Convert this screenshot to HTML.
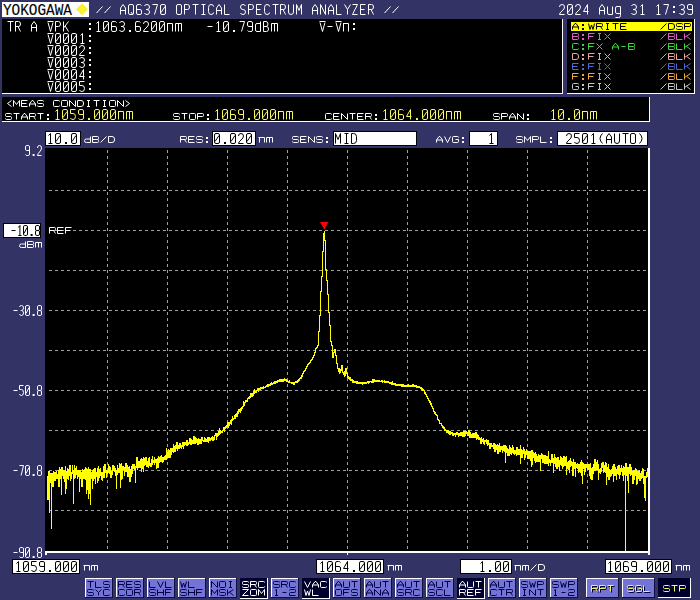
<!DOCTYPE html>
<html><head><meta charset="utf-8"><title>AQ6370</title>
<style>html,body{margin:0;padding:0;width:700px;height:600px;overflow:hidden;background:#333366;} svg{display:block;} text{font-family:"Liberation Mono",monospace;}</style>
</head><body>
<svg width="700" height="600" viewBox="0 0 700 600" shape-rendering="auto"><rect x="0" y="0" width="700" height="600" fill="#333366" />
<rect x="2" y="2" width="87" height="15" fill="#ffffff" />
<text x="3" y="15.20" font-family="Liberation Sans" font-weight="normal" font-size="16.28" fill="#000000" textLength="69.0" lengthAdjust="spacingAndGlyphs" xml:space="preserve" stroke="#000" stroke-width="0.15" opacity="0.99">YOKOGAWA</text>
<polygon points="82,3.2 88,9.2 82,15.2 76,9.2" fill="#f8f030"/>
<path transform="translate(96.50,4.5) scale(1.0,1.0)" d="M0,8.5 L6,2" fill="none" stroke="#ffffff" stroke-width="1.0" vector-effect="non-scaling-stroke"/>
<path transform="translate(104.50,4.5) scale(1.0,1.0)" d="M0,8.5 L6,2" fill="none" stroke="#ffffff" stroke-width="1.0" vector-effect="non-scaling-stroke"/>
<path transform="translate(120.50,4.5) scale(1.0,1.0)" d="M0,10 V3.5 L2.5,0 L5,3.5 V10 M0,6 H5" fill="none" stroke="#ffffff" stroke-width="1.0" vector-effect="non-scaling-stroke"/>
<path transform="translate(128.50,4.5) scale(1.0,1.0)" d="M1.5,0 H3.5 Q5,0 5,1.5 V8.5 Q5,10 3.5,10 H1.5 Q0,10 0,8.5 V1.5 Q0,0 1.5,0 Z M2.5,7.5 L4.5,10.5" fill="none" stroke="#ffffff" stroke-width="1.0" vector-effect="non-scaling-stroke"/>
<path transform="translate(136.50,4.5) scale(1.0,1.0)" d="M5,1 Q4.5,0 3,0 H1.5 Q0,0 0,1.5 V8.5 Q0,10 1.5,10 H3.5 Q5,10 5,8.5 V6.5 Q5,5 3.5,5 H0" fill="none" stroke="#ffffff" stroke-width="1.0" vector-effect="non-scaling-stroke"/>
<path transform="translate(144.50,4.5) scale(1.0,1.0)" d="M0,1.5 Q0.5,0 2.5,0 Q5,0 5,2.5 Q5,5 2.5,5 H1.5 M2.5,5 Q5,5 5,7.5 Q5,10 2.5,10 Q0.5,10 0,8.5" fill="none" stroke="#ffffff" stroke-width="1.0" vector-effect="non-scaling-stroke"/>
<path transform="translate(152.50,4.5) scale(1.0,1.0)" d="M0,0 H5 L2,10" fill="none" stroke="#ffffff" stroke-width="1.0" vector-effect="non-scaling-stroke"/>
<path transform="translate(160.50,4.5) scale(1.0,1.0)" d="M1.5,0 H3.5 Q5,0 5,1.5 V8.5 Q5,10 3.5,10 H1.5 Q0,10 0,8.5 V1.5 Q0,0 1.5,0 Z M4.5,2 L0.5,8" fill="none" stroke="#ffffff" stroke-width="1.0" vector-effect="non-scaling-stroke"/>
<path transform="translate(176.50,4.5) scale(1.0,1.0)" d="M1.5,0 H3.5 Q5,0 5,1.5 V8.5 Q5,10 3.5,10 H1.5 Q0,10 0,8.5 V1.5 Q0,0 1.5,0 Z" fill="none" stroke="#ffffff" stroke-width="1.0" vector-effect="non-scaling-stroke"/>
<path transform="translate(184.50,4.5) scale(1.0,1.0)" d="M0,10 V0 H3 Q5,0 5,2.5 Q5,5 3,5 H0" fill="none" stroke="#ffffff" stroke-width="1.0" vector-effect="non-scaling-stroke"/>
<path transform="translate(192.50,4.5) scale(1.0,1.0)" d="M0,0 H6 M3,0 V10" fill="none" stroke="#ffffff" stroke-width="1.0" vector-effect="non-scaling-stroke"/>
<path transform="translate(200.50,4.5) scale(1.0,1.0)" d="M1,0 H5 M3,0 V10 M1,10 H5" fill="none" stroke="#ffffff" stroke-width="1.0" vector-effect="non-scaling-stroke"/>
<path transform="translate(208.50,4.5) scale(1.0,1.0)" d="M5,2 Q5,0 2.5,0 Q0,0 0,3 V7 Q0,10 2.5,10 Q5,10 5,8" fill="none" stroke="#ffffff" stroke-width="1.0" vector-effect="non-scaling-stroke"/>
<path transform="translate(216.50,4.5) scale(1.0,1.0)" d="M0,10 V3.5 L2.5,0 L5,3.5 V10 M0,6 H5" fill="none" stroke="#ffffff" stroke-width="1.0" vector-effect="non-scaling-stroke"/>
<path transform="translate(224.50,4.5) scale(1.0,1.0)" d="M0,0 V10 H5" fill="none" stroke="#ffffff" stroke-width="1.0" vector-effect="non-scaling-stroke"/>
<path transform="translate(240.50,4.5) scale(1.0,1.0)" d="M5,1.5 Q4.5,0 2.5,0 Q0,0 0,2.5 Q0,5 2.5,5 Q5,5 5,7.5 Q5,10 2.5,10 Q0.5,10 0,8.5" fill="none" stroke="#ffffff" stroke-width="1.0" vector-effect="non-scaling-stroke"/>
<path transform="translate(248.50,4.5) scale(1.0,1.0)" d="M0,10 V0 H3 Q5,0 5,2.5 Q5,5 3,5 H0" fill="none" stroke="#ffffff" stroke-width="1.0" vector-effect="non-scaling-stroke"/>
<path transform="translate(256.50,4.5) scale(1.0,1.0)" d="M5,0 H0 V10 H5 M0,5 H4" fill="none" stroke="#ffffff" stroke-width="1.0" vector-effect="non-scaling-stroke"/>
<path transform="translate(264.50,4.5) scale(1.0,1.0)" d="M5,2 Q5,0 2.5,0 Q0,0 0,3 V7 Q0,10 2.5,10 Q5,10 5,8" fill="none" stroke="#ffffff" stroke-width="1.0" vector-effect="non-scaling-stroke"/>
<path transform="translate(272.50,4.5) scale(1.0,1.0)" d="M0,0 H6 M3,0 V10" fill="none" stroke="#ffffff" stroke-width="1.0" vector-effect="non-scaling-stroke"/>
<path transform="translate(280.50,4.5) scale(1.0,1.0)" d="M0,10 V0 H3 Q5,0 5,2.5 Q5,5 3,5 H0 M2.5,5 L5,10" fill="none" stroke="#ffffff" stroke-width="1.0" vector-effect="non-scaling-stroke"/>
<path transform="translate(288.50,4.5) scale(1.0,1.0)" d="M0,0 V7.5 Q0,10 2.5,10 Q5,10 5,7.5 V0" fill="none" stroke="#ffffff" stroke-width="1.0" vector-effect="non-scaling-stroke"/>
<path transform="translate(296.50,4.5) scale(1.0,1.0)" d="M0,10 V0 L2.5,6 L5,0 V10" fill="none" stroke="#ffffff" stroke-width="1.0" vector-effect="non-scaling-stroke"/>
<path transform="translate(312.50,4.5) scale(1.0,1.0)" d="M0,10 V3.5 L2.5,0 L5,3.5 V10 M0,6 H5" fill="none" stroke="#ffffff" stroke-width="1.0" vector-effect="non-scaling-stroke"/>
<path transform="translate(320.50,4.5) scale(1.0,1.0)" d="M0,10 V0 L5,10 V0" fill="none" stroke="#ffffff" stroke-width="1.0" vector-effect="non-scaling-stroke"/>
<path transform="translate(328.50,4.5) scale(1.0,1.0)" d="M0,10 V3.5 L2.5,0 L5,3.5 V10 M0,6 H5" fill="none" stroke="#ffffff" stroke-width="1.0" vector-effect="non-scaling-stroke"/>
<path transform="translate(336.50,4.5) scale(1.0,1.0)" d="M0,0 V10 H5" fill="none" stroke="#ffffff" stroke-width="1.0" vector-effect="non-scaling-stroke"/>
<path transform="translate(344.50,4.5) scale(1.0,1.0)" d="M0,0 L3,5 L6,0 M3,5 V10" fill="none" stroke="#ffffff" stroke-width="1.0" vector-effect="non-scaling-stroke"/>
<path transform="translate(352.50,4.5) scale(1.0,1.0)" d="M0,0 H5 L0,10 H5" fill="none" stroke="#ffffff" stroke-width="1.0" vector-effect="non-scaling-stroke"/>
<path transform="translate(360.50,4.5) scale(1.0,1.0)" d="M5,0 H0 V10 H5 M0,5 H4" fill="none" stroke="#ffffff" stroke-width="1.0" vector-effect="non-scaling-stroke"/>
<path transform="translate(368.50,4.5) scale(1.0,1.0)" d="M0,10 V0 H3 Q5,0 5,2.5 Q5,5 3,5 H0 M2.5,5 L5,10" fill="none" stroke="#ffffff" stroke-width="1.0" vector-effect="non-scaling-stroke"/>
<path transform="translate(384.50,4.5) scale(1.0,1.0)" d="M0,8.5 L6,2" fill="none" stroke="#ffffff" stroke-width="1.0" vector-effect="non-scaling-stroke"/>
<path transform="translate(392.50,4.5) scale(1.0,1.0)" d="M0,8.5 L6,2" fill="none" stroke="#ffffff" stroke-width="1.0" vector-effect="non-scaling-stroke"/>
<path transform="translate(559.50,4.5) scale(1.0,1.0)" d="M0,2.5 Q0,0 2.5,0 Q5,0 5,2.5 Q5,4.5 2.5,6.5 Q0,8.5 0,10 H5" fill="none" stroke="#ffffff" stroke-width="1.0" vector-effect="non-scaling-stroke"/>
<path transform="translate(567.50,4.5) scale(1.0,1.0)" d="M1.5,0 H3.5 Q5,0 5,1.5 V8.5 Q5,10 3.5,10 H1.5 Q0,10 0,8.5 V1.5 Q0,0 1.5,0 Z M4.5,2 L0.5,8" fill="none" stroke="#ffffff" stroke-width="1.0" vector-effect="non-scaling-stroke"/>
<path transform="translate(575.50,4.5) scale(1.0,1.0)" d="M0,2.5 Q0,0 2.5,0 Q5,0 5,2.5 Q5,4.5 2.5,6.5 Q0,8.5 0,10 H5" fill="none" stroke="#ffffff" stroke-width="1.0" vector-effect="non-scaling-stroke"/>
<path transform="translate(583.50,4.5) scale(1.0,1.0)" d="M4,10 V0 L0,7 H5" fill="none" stroke="#ffffff" stroke-width="1.0" vector-effect="non-scaling-stroke"/>
<path transform="translate(599.50,4.5) scale(1.0,1.0)" d="M0,10 V3.5 L2.5,0 L5,3.5 V10 M0,6 H5" fill="none" stroke="#ffffff" stroke-width="1.0" vector-effect="non-scaling-stroke"/>
<path transform="translate(607.50,4.5) scale(1.0,1.0)" d="M0,2 V8.5 Q0,10 1.5,10 H5 M5,2 V10" fill="none" stroke="#ffffff" stroke-width="1.0" vector-effect="non-scaling-stroke"/>
<path transform="translate(615.50,4.5) scale(1.0,1.0)" d="M5,2 V11 Q5,13 3,13 H0 M5,2 H1.5 Q0,2 0,3.5 V7.5 Q0,9 1.5,9 H5" fill="none" stroke="#ffffff" stroke-width="1.0" vector-effect="non-scaling-stroke"/>
<path transform="translate(631.50,4.5) scale(1.0,1.0)" d="M0,1.5 Q0.5,0 2.5,0 Q5,0 5,2.5 Q5,5 2.5,5 H1.5 M2.5,5 Q5,5 5,7.5 Q5,10 2.5,10 Q0.5,10 0,8.5" fill="none" stroke="#ffffff" stroke-width="1.0" vector-effect="non-scaling-stroke"/>
<path transform="translate(639.50,4.5) scale(1.0,1.0)" d="M1,2 L3,0 V10 M1,10 H5" fill="none" stroke="#ffffff" stroke-width="1.0" vector-effect="non-scaling-stroke"/>
<path transform="translate(655.50,4.5) scale(1.0,1.0)" d="M1,2 L3,0 V10 M1,10 H5" fill="none" stroke="#ffffff" stroke-width="1.0" vector-effect="non-scaling-stroke"/>
<path transform="translate(663.50,4.5) scale(1.0,1.0)" d="M0,0 H5 L2,10" fill="none" stroke="#ffffff" stroke-width="1.0" vector-effect="non-scaling-stroke"/>
<rect x="673.00" y="6" width="2" height="2" fill="#ffffff"/><rect x="673.00" y="11" width="2" height="2" fill="#ffffff"/>
<path transform="translate(679.50,4.5) scale(1.0,1.0)" d="M0,1.5 Q0.5,0 2.5,0 Q5,0 5,2.5 Q5,5 2.5,5 H1.5 M2.5,5 Q5,5 5,7.5 Q5,10 2.5,10 Q0.5,10 0,8.5" fill="none" stroke="#ffffff" stroke-width="1.0" vector-effect="non-scaling-stroke"/>
<path transform="translate(687.50,4.5) scale(1.0,1.0)" d="M0,9 Q0.5,10 2,10 H3.5 Q5,10 5,8.5 V1.5 Q5,0 3.5,0 H1.5 Q0,0 0,1.5 V3.5 Q0,5 1.5,5 H5" fill="none" stroke="#ffffff" stroke-width="1.0" vector-effect="non-scaling-stroke"/>
<rect x="2" y="19" width="560" height="74" fill="#000000" />
<rect x="2" y="93" width="561" height="1" fill="#ffffff" />
<rect x="562" y="19" width="1" height="75" fill="#ffffff" />
<path transform="translate(7.50,21.5) scale(1.0,1.0)" d="M0,0 H6 M3,0 V10" fill="none" stroke="#ffffff" stroke-width="1.0" vector-effect="non-scaling-stroke"/>
<path transform="translate(15.50,21.5) scale(1.0,1.0)" d="M0,10 V0 H3 Q5,0 5,2.5 Q5,5 3,5 H0 M2.5,5 L5,10" fill="none" stroke="#ffffff" stroke-width="1.0" vector-effect="non-scaling-stroke"/>
<path transform="translate(31.50,21.5) scale(1.0,1.0)" d="M0,10 V3.5 L2.5,0 L5,3.5 V10 M0,6 H5" fill="none" stroke="#ffffff" stroke-width="1.0" vector-effect="non-scaling-stroke"/>
<path transform="translate(47.50,21.5) scale(1.0,1.0)" d="M0,0 H6 M0.5,1 L3,10 L5.5,1" fill="none" stroke="#ffffff" stroke-width="1.0" vector-effect="non-scaling-stroke"/>
<path transform="translate(55.50,21.5) scale(1.0,1.0)" d="M0,10 V0 H3 Q5,0 5,2.5 Q5,5 3,5 H0" fill="none" stroke="#ffffff" stroke-width="1.0" vector-effect="non-scaling-stroke"/>
<path transform="translate(63.50,21.5) scale(1.0,1.0)" d="M0,0 V10 M5,0 L0,6.5 M1.7,4.5 L5,10" fill="none" stroke="#ffffff" stroke-width="1.0" vector-effect="non-scaling-stroke"/>
<rect x="89.00" y="23" width="2" height="2" fill="#ffffff"/><rect x="89.00" y="28" width="2" height="2" fill="#ffffff"/>
<path transform="translate(95.50,21.5) scale(1.0,1.0)" d="M1,2 L3,0 V10 M1,10 H5" fill="none" stroke="#ffffff" stroke-width="1.0" vector-effect="non-scaling-stroke"/>
<path transform="translate(103.50,21.5) scale(1.0,1.0)" d="M1.5,0 H3.5 Q5,0 5,1.5 V8.5 Q5,10 3.5,10 H1.5 Q0,10 0,8.5 V1.5 Q0,0 1.5,0 Z M4.5,2 L0.5,8" fill="none" stroke="#ffffff" stroke-width="1.0" vector-effect="non-scaling-stroke"/>
<path transform="translate(111.50,21.5) scale(1.0,1.0)" d="M5,1 Q4.5,0 3,0 H1.5 Q0,0 0,1.5 V8.5 Q0,10 1.5,10 H3.5 Q5,10 5,8.5 V6.5 Q5,5 3.5,5 H0" fill="none" stroke="#ffffff" stroke-width="1.0" vector-effect="non-scaling-stroke"/>
<path transform="translate(119.50,21.5) scale(1.0,1.0)" d="M0,1.5 Q0.5,0 2.5,0 Q5,0 5,2.5 Q5,5 2.5,5 H1.5 M2.5,5 Q5,5 5,7.5 Q5,10 2.5,10 Q0.5,10 0,8.5" fill="none" stroke="#ffffff" stroke-width="1.0" vector-effect="non-scaling-stroke"/>
<rect x="129.00" y="30" width="2" height="2" fill="#ffffff"/>
<path transform="translate(135.50,21.5) scale(1.0,1.0)" d="M5,1 Q4.5,0 3,0 H1.5 Q0,0 0,1.5 V8.5 Q0,10 1.5,10 H3.5 Q5,10 5,8.5 V6.5 Q5,5 3.5,5 H0" fill="none" stroke="#ffffff" stroke-width="1.0" vector-effect="non-scaling-stroke"/>
<path transform="translate(143.50,21.5) scale(1.0,1.0)" d="M0,2.5 Q0,0 2.5,0 Q5,0 5,2.5 Q5,4.5 2.5,6.5 Q0,8.5 0,10 H5" fill="none" stroke="#ffffff" stroke-width="1.0" vector-effect="non-scaling-stroke"/>
<path transform="translate(151.50,21.5) scale(1.0,1.0)" d="M1.5,0 H3.5 Q5,0 5,1.5 V8.5 Q5,10 3.5,10 H1.5 Q0,10 0,8.5 V1.5 Q0,0 1.5,0 Z M4.5,2 L0.5,8" fill="none" stroke="#ffffff" stroke-width="1.0" vector-effect="non-scaling-stroke"/>
<path transform="translate(159.50,21.5) scale(1.0,1.0)" d="M1.5,0 H3.5 Q5,0 5,1.5 V8.5 Q5,10 3.5,10 H1.5 Q0,10 0,8.5 V1.5 Q0,0 1.5,0 Z M4.5,2 L0.5,8" fill="none" stroke="#ffffff" stroke-width="1.0" vector-effect="non-scaling-stroke"/>
<path transform="translate(167.50,21.5) scale(1.0,1.0)" d="M0,2 V10 M-0.5,2 H5 V10" fill="none" stroke="#ffffff" stroke-width="1.0" vector-effect="non-scaling-stroke"/>
<path transform="translate(175.50,21.5) scale(1.0,1.0)" d="M0,2 V10 M0,2 H6 V10 M3,2 V10" fill="none" stroke="#ffffff" stroke-width="1.0" vector-effect="non-scaling-stroke"/>
<path transform="translate(207.50,21.5) scale(1.0,1.0)" d="M0,5 H5" fill="none" stroke="#ffffff" stroke-width="1.0" vector-effect="non-scaling-stroke"/>
<path transform="translate(215.50,21.5) scale(1.0,1.0)" d="M1,2 L3,0 V10 M1,10 H5" fill="none" stroke="#ffffff" stroke-width="1.0" vector-effect="non-scaling-stroke"/>
<path transform="translate(223.50,21.5) scale(1.0,1.0)" d="M1.5,0 H3.5 Q5,0 5,1.5 V8.5 Q5,10 3.5,10 H1.5 Q0,10 0,8.5 V1.5 Q0,0 1.5,0 Z M4.5,2 L0.5,8" fill="none" stroke="#ffffff" stroke-width="1.0" vector-effect="non-scaling-stroke"/>
<rect x="233.00" y="30" width="2" height="2" fill="#ffffff"/>
<path transform="translate(239.50,21.5) scale(1.0,1.0)" d="M0,0 H5 L2,10" fill="none" stroke="#ffffff" stroke-width="1.0" vector-effect="non-scaling-stroke"/>
<path transform="translate(247.50,21.5) scale(1.0,1.0)" d="M0,9 Q0.5,10 2,10 H3.5 Q5,10 5,8.5 V1.5 Q5,0 3.5,0 H1.5 Q0,0 0,1.5 V3.5 Q0,5 1.5,5 H5" fill="none" stroke="#ffffff" stroke-width="1.0" vector-effect="non-scaling-stroke"/>
<path transform="translate(255.50,21.5) scale(1.0,1.0)" d="M5,0 V10 H1.5 Q0,10 0,8.5 V3.5 Q0,2 1.5,2 H5" fill="none" stroke="#ffffff" stroke-width="1.0" vector-effect="non-scaling-stroke"/>
<path transform="translate(263.50,21.5) scale(1.0,1.0)" d="M0,0 V10 H3 Q5,10 5,7.5 Q5,5 3,5 H0 M0,0 H2.5 Q4.5,0 4.5,2.5 Q4.5,5 2.5,5" fill="none" stroke="#ffffff" stroke-width="1.0" vector-effect="non-scaling-stroke"/>
<path transform="translate(271.50,21.5) scale(1.0,1.0)" d="M0,2 V10 M0,2 H6 V10 M3,2 V10" fill="none" stroke="#ffffff" stroke-width="1.0" vector-effect="non-scaling-stroke"/>
<path transform="translate(319.50,21.5) scale(1.0,1.0)" d="M0,0 H6 M0.5,1 L3,10 L5.5,1" fill="none" stroke="#ffffff" stroke-width="1.0" vector-effect="non-scaling-stroke"/>
<path transform="translate(327.50,21.5) scale(1.0,1.0)" d="M0,5 H5" fill="none" stroke="#ffffff" stroke-width="1.0" vector-effect="non-scaling-stroke"/>
<path transform="translate(335.50,21.5) scale(1.0,1.0)" d="M0,0 H6 M0.5,1 L3,10 L5.5,1" fill="none" stroke="#ffffff" stroke-width="1.0" vector-effect="non-scaling-stroke"/>
<path transform="translate(343.50,21.5) scale(1.0,1.0)" d="M0,2 V10 M-0.5,2 H5 V10" fill="none" stroke="#ffffff" stroke-width="1.0" vector-effect="non-scaling-stroke"/>
<rect x="353.00" y="23" width="2" height="2" fill="#ffffff"/><rect x="353.00" y="28" width="2" height="2" fill="#ffffff"/>
<path transform="translate(47.50,33.5) scale(1.0,1.0)" d="M0,0 H6 M0.5,1 L3,10 L5.5,1" fill="none" stroke="#ffffff" stroke-width="1.0" vector-effect="non-scaling-stroke"/>
<path transform="translate(55.50,33.5) scale(1.0,1.0)" d="M1.5,0 H3.5 Q5,0 5,1.5 V8.5 Q5,10 3.5,10 H1.5 Q0,10 0,8.5 V1.5 Q0,0 1.5,0 Z M4.5,2 L0.5,8" fill="none" stroke="#ffffff" stroke-width="1.0" vector-effect="non-scaling-stroke"/>
<path transform="translate(63.50,33.5) scale(1.0,1.0)" d="M1.5,0 H3.5 Q5,0 5,1.5 V8.5 Q5,10 3.5,10 H1.5 Q0,10 0,8.5 V1.5 Q0,0 1.5,0 Z M4.5,2 L0.5,8" fill="none" stroke="#ffffff" stroke-width="1.0" vector-effect="non-scaling-stroke"/>
<path transform="translate(71.50,33.5) scale(1.0,1.0)" d="M1.5,0 H3.5 Q5,0 5,1.5 V8.5 Q5,10 3.5,10 H1.5 Q0,10 0,8.5 V1.5 Q0,0 1.5,0 Z M4.5,2 L0.5,8" fill="none" stroke="#ffffff" stroke-width="1.0" vector-effect="non-scaling-stroke"/>
<path transform="translate(79.50,33.5) scale(1.0,1.0)" d="M1,2 L3,0 V10 M1,10 H5" fill="none" stroke="#ffffff" stroke-width="1.0" vector-effect="non-scaling-stroke"/>
<rect x="89.00" y="35" width="2" height="2" fill="#ffffff"/><rect x="89.00" y="40" width="2" height="2" fill="#ffffff"/>
<path transform="translate(47.50,45.5) scale(1.0,1.0)" d="M0,0 H6 M0.5,1 L3,10 L5.5,1" fill="none" stroke="#ffffff" stroke-width="1.0" vector-effect="non-scaling-stroke"/>
<path transform="translate(55.50,45.5) scale(1.0,1.0)" d="M1.5,0 H3.5 Q5,0 5,1.5 V8.5 Q5,10 3.5,10 H1.5 Q0,10 0,8.5 V1.5 Q0,0 1.5,0 Z M4.5,2 L0.5,8" fill="none" stroke="#ffffff" stroke-width="1.0" vector-effect="non-scaling-stroke"/>
<path transform="translate(63.50,45.5) scale(1.0,1.0)" d="M1.5,0 H3.5 Q5,0 5,1.5 V8.5 Q5,10 3.5,10 H1.5 Q0,10 0,8.5 V1.5 Q0,0 1.5,0 Z M4.5,2 L0.5,8" fill="none" stroke="#ffffff" stroke-width="1.0" vector-effect="non-scaling-stroke"/>
<path transform="translate(71.50,45.5) scale(1.0,1.0)" d="M1.5,0 H3.5 Q5,0 5,1.5 V8.5 Q5,10 3.5,10 H1.5 Q0,10 0,8.5 V1.5 Q0,0 1.5,0 Z M4.5,2 L0.5,8" fill="none" stroke="#ffffff" stroke-width="1.0" vector-effect="non-scaling-stroke"/>
<path transform="translate(79.50,45.5) scale(1.0,1.0)" d="M0,2.5 Q0,0 2.5,0 Q5,0 5,2.5 Q5,4.5 2.5,6.5 Q0,8.5 0,10 H5" fill="none" stroke="#ffffff" stroke-width="1.0" vector-effect="non-scaling-stroke"/>
<rect x="89.00" y="47" width="2" height="2" fill="#ffffff"/><rect x="89.00" y="52" width="2" height="2" fill="#ffffff"/>
<path transform="translate(47.50,57.5) scale(1.0,1.0)" d="M0,0 H6 M0.5,1 L3,10 L5.5,1" fill="none" stroke="#ffffff" stroke-width="1.0" vector-effect="non-scaling-stroke"/>
<path transform="translate(55.50,57.5) scale(1.0,1.0)" d="M1.5,0 H3.5 Q5,0 5,1.5 V8.5 Q5,10 3.5,10 H1.5 Q0,10 0,8.5 V1.5 Q0,0 1.5,0 Z M4.5,2 L0.5,8" fill="none" stroke="#ffffff" stroke-width="1.0" vector-effect="non-scaling-stroke"/>
<path transform="translate(63.50,57.5) scale(1.0,1.0)" d="M1.5,0 H3.5 Q5,0 5,1.5 V8.5 Q5,10 3.5,10 H1.5 Q0,10 0,8.5 V1.5 Q0,0 1.5,0 Z M4.5,2 L0.5,8" fill="none" stroke="#ffffff" stroke-width="1.0" vector-effect="non-scaling-stroke"/>
<path transform="translate(71.50,57.5) scale(1.0,1.0)" d="M1.5,0 H3.5 Q5,0 5,1.5 V8.5 Q5,10 3.5,10 H1.5 Q0,10 0,8.5 V1.5 Q0,0 1.5,0 Z M4.5,2 L0.5,8" fill="none" stroke="#ffffff" stroke-width="1.0" vector-effect="non-scaling-stroke"/>
<path transform="translate(79.50,57.5) scale(1.0,1.0)" d="M0,1.5 Q0.5,0 2.5,0 Q5,0 5,2.5 Q5,5 2.5,5 H1.5 M2.5,5 Q5,5 5,7.5 Q5,10 2.5,10 Q0.5,10 0,8.5" fill="none" stroke="#ffffff" stroke-width="1.0" vector-effect="non-scaling-stroke"/>
<rect x="89.00" y="59" width="2" height="2" fill="#ffffff"/><rect x="89.00" y="64" width="2" height="2" fill="#ffffff"/>
<path transform="translate(47.50,69.5) scale(1.0,1.0)" d="M0,0 H6 M0.5,1 L3,10 L5.5,1" fill="none" stroke="#ffffff" stroke-width="1.0" vector-effect="non-scaling-stroke"/>
<path transform="translate(55.50,69.5) scale(1.0,1.0)" d="M1.5,0 H3.5 Q5,0 5,1.5 V8.5 Q5,10 3.5,10 H1.5 Q0,10 0,8.5 V1.5 Q0,0 1.5,0 Z M4.5,2 L0.5,8" fill="none" stroke="#ffffff" stroke-width="1.0" vector-effect="non-scaling-stroke"/>
<path transform="translate(63.50,69.5) scale(1.0,1.0)" d="M1.5,0 H3.5 Q5,0 5,1.5 V8.5 Q5,10 3.5,10 H1.5 Q0,10 0,8.5 V1.5 Q0,0 1.5,0 Z M4.5,2 L0.5,8" fill="none" stroke="#ffffff" stroke-width="1.0" vector-effect="non-scaling-stroke"/>
<path transform="translate(71.50,69.5) scale(1.0,1.0)" d="M1.5,0 H3.5 Q5,0 5,1.5 V8.5 Q5,10 3.5,10 H1.5 Q0,10 0,8.5 V1.5 Q0,0 1.5,0 Z M4.5,2 L0.5,8" fill="none" stroke="#ffffff" stroke-width="1.0" vector-effect="non-scaling-stroke"/>
<path transform="translate(79.50,69.5) scale(1.0,1.0)" d="M4,10 V0 L0,7 H5" fill="none" stroke="#ffffff" stroke-width="1.0" vector-effect="non-scaling-stroke"/>
<rect x="89.00" y="71" width="2" height="2" fill="#ffffff"/><rect x="89.00" y="76" width="2" height="2" fill="#ffffff"/>
<path transform="translate(47.50,81.5) scale(1.0,1.0)" d="M0,0 H6 M0.5,1 L3,10 L5.5,1" fill="none" stroke="#ffffff" stroke-width="1.0" vector-effect="non-scaling-stroke"/>
<path transform="translate(55.50,81.5) scale(1.0,1.0)" d="M1.5,0 H3.5 Q5,0 5,1.5 V8.5 Q5,10 3.5,10 H1.5 Q0,10 0,8.5 V1.5 Q0,0 1.5,0 Z M4.5,2 L0.5,8" fill="none" stroke="#ffffff" stroke-width="1.0" vector-effect="non-scaling-stroke"/>
<path transform="translate(63.50,81.5) scale(1.0,1.0)" d="M1.5,0 H3.5 Q5,0 5,1.5 V8.5 Q5,10 3.5,10 H1.5 Q0,10 0,8.5 V1.5 Q0,0 1.5,0 Z M4.5,2 L0.5,8" fill="none" stroke="#ffffff" stroke-width="1.0" vector-effect="non-scaling-stroke"/>
<path transform="translate(71.50,81.5) scale(1.0,1.0)" d="M1.5,0 H3.5 Q5,0 5,1.5 V8.5 Q5,10 3.5,10 H1.5 Q0,10 0,8.5 V1.5 Q0,0 1.5,0 Z M4.5,2 L0.5,8" fill="none" stroke="#ffffff" stroke-width="1.0" vector-effect="non-scaling-stroke"/>
<path transform="translate(79.50,81.5) scale(1.0,1.0)" d="M5,0 H0 V4 H2.5 Q5,4 5,7 Q5,10 2.5,10 Q0.5,10 0,8.5" fill="none" stroke="#ffffff" stroke-width="1.0" vector-effect="non-scaling-stroke"/>
<rect x="89.00" y="83" width="2" height="2" fill="#ffffff"/><rect x="89.00" y="88" width="2" height="2" fill="#ffffff"/>
<rect x="567" y="19" width="127" height="74" fill="#000000" />
<rect x="694" y="19" width="1" height="75" fill="#ffffff" />
<rect x="567" y="93" width="128" height="1" fill="#ffffff" />
<rect x="571" y="22" width="121" height="9" fill="#ffff00" />
<path transform="translate(572.5,23.5) scale(1.0,1.0)" d="M0,6 V3.5 L2.5,0 H3.5 L6,3.5 V6 M0,3.5 H6" fill="none" stroke="#000000" stroke-width="1" vector-effect="non-scaling-stroke"/>
<rect x="582" y="24" width="2" height="2" fill="#000000"/><rect x="582" y="28" width="2" height="2" fill="#000000"/>
<path transform="translate(588.5,23.5) scale(1.0,1.0)" d="M0,0 L1.5,6 L3,1.5 L4.5,6 L6,0" fill="none" stroke="#000000" stroke-width="1" vector-effect="non-scaling-stroke"/>
<path transform="translate(596.5,23.5) scale(1.0,1.0)" d="M0,6 V0 H5 Q6,0 6,1 V2 Q6,3 5,3 H0 M4,3 L6,6" fill="none" stroke="#000000" stroke-width="1" vector-effect="non-scaling-stroke"/>
<path transform="translate(604.5,23.5) scale(1.0,1.0)" d="M1.5,0 H4.5 M3,0 V6 M1.5,6 H4.5" fill="none" stroke="#000000" stroke-width="1" vector-effect="non-scaling-stroke"/>
<path transform="translate(612.5,23.5) scale(1.0,1.0)" d="M0,0 H6 M3,0 V6" fill="none" stroke="#000000" stroke-width="1" vector-effect="non-scaling-stroke"/>
<path transform="translate(620.5,23.5) scale(1.0,1.0)" d="M6,0 H0 V6 H6 M0,3 H5" fill="none" stroke="#000000" stroke-width="1" vector-effect="non-scaling-stroke"/>
<path transform="translate(660.5,23.5) scale(1.0,1.0)" d="M0,6 L6,0" fill="none" stroke="#000000" stroke-width="1" vector-effect="non-scaling-stroke"/>
<path transform="translate(668.5,23.5) scale(1.0,1.0)" d="M0,0 V6 H3.5 Q6,6 6,3.5 V2.5 Q6,0 3.5,0 Z" fill="none" stroke="#000000" stroke-width="1" vector-effect="non-scaling-stroke"/>
<path transform="translate(676.5,23.5) scale(1.0,1.0)" d="M6,1 Q6,0 5,0 H1 Q0,0 0,1 V2 Q0,3 1,3 H5 Q6,3 6,4 V5 Q6,6 5,6 H1 Q0,6 0,5" fill="none" stroke="#000000" stroke-width="1" vector-effect="non-scaling-stroke"/>
<path transform="translate(684.5,23.5) scale(1.0,1.0)" d="M0,6 V0 H5 Q6,0 6,1 V2 Q6,3 5,3 H0" fill="none" stroke="#000000" stroke-width="1" vector-effect="non-scaling-stroke"/>
<path transform="translate(572.5,33.5) scale(1.0,1.0)" d="M0,0 V6 H5 Q6,6 6,5 V4 Q6,3 5,3 H0 M0,0 H5 Q6,0 6,1 V2 Q6,3 5,3" fill="none" stroke="#e060c8" stroke-width="1" vector-effect="non-scaling-stroke"/>
<rect x="582" y="34" width="2" height="2" fill="#e060c8"/><rect x="582" y="38" width="2" height="2" fill="#e060c8"/>
<path transform="translate(588.5,33.5) scale(1.0,1.0)" d="M6,0 H0 V6 M0,3 H5" fill="none" stroke="#e060c8" stroke-width="1" vector-effect="non-scaling-stroke"/>
<path transform="translate(596.5,33.5) scale(1.0,1.0)" d="M1.5,0 H4.5 M3,0 V6 M1.5,6 H4.5" fill="none" stroke="#e060c8" stroke-width="1" vector-effect="non-scaling-stroke"/>
<path transform="translate(604.5,33.5) scale(1.0,1.0)" d="M0,0 L6,6 M6,0 L0,6" fill="none" stroke="#e060c8" stroke-width="1" vector-effect="non-scaling-stroke"/>
<path transform="translate(660.5,33.5) scale(1.0,1.0)" d="M0,6 L6,0" fill="none" stroke="#e060c8" stroke-width="1" vector-effect="non-scaling-stroke"/>
<path transform="translate(668.5,33.5) scale(1.0,1.0)" d="M0,0 V6 H5 Q6,6 6,5 V4 Q6,3 5,3 H0 M0,0 H5 Q6,0 6,1 V2 Q6,3 5,3" fill="none" stroke="#e060c8" stroke-width="1" vector-effect="non-scaling-stroke"/>
<path transform="translate(676.5,33.5) scale(1.0,1.0)" d="M0,0 V6 H6" fill="none" stroke="#e060c8" stroke-width="1" vector-effect="non-scaling-stroke"/>
<path transform="translate(684.5,33.5) scale(1.0,1.0)" d="M0,0 V6 M6,0 L0,4 M2,2.8 L6,6" fill="none" stroke="#e060c8" stroke-width="1" vector-effect="non-scaling-stroke"/>
<path transform="translate(572.5,43.5) scale(1.0,1.0)" d="M6,1 Q6,0 5,0 H1 Q0,0 0,1 V5 Q0,6 1,6 H5 Q6,6 6,5" fill="none" stroke="#40d840" stroke-width="1" vector-effect="non-scaling-stroke"/>
<rect x="582" y="44" width="2" height="2" fill="#40d840"/><rect x="582" y="48" width="2" height="2" fill="#40d840"/>
<path transform="translate(588.5,43.5) scale(1.0,1.0)" d="M6,0 H0 V6 M0,3 H5" fill="none" stroke="#40d840" stroke-width="1" vector-effect="non-scaling-stroke"/>
<path transform="translate(596.5,43.5) scale(1.0,1.0)" d="M0,0 L6,6 M6,0 L0,6" fill="none" stroke="#40d840" stroke-width="1" vector-effect="non-scaling-stroke"/>
<path transform="translate(612.5,43.5) scale(1.0,1.0)" d="M0,6 V3.5 L2.5,0 H3.5 L6,3.5 V6 M0,3.5 H6" fill="none" stroke="#40d840" stroke-width="1" vector-effect="non-scaling-stroke"/>
<path transform="translate(620.5,43.5) scale(1.0,1.0)" d="M1,3 H5" fill="none" stroke="#40d840" stroke-width="1" vector-effect="non-scaling-stroke"/>
<path transform="translate(628.5,43.5) scale(1.0,1.0)" d="M0,0 V6 H5 Q6,6 6,5 V4 Q6,3 5,3 H0 M0,0 H5 Q6,0 6,1 V2 Q6,3 5,3" fill="none" stroke="#40d840" stroke-width="1" vector-effect="non-scaling-stroke"/>
<path transform="translate(660.5,43.5) scale(1.0,1.0)" d="M0,6 L6,0" fill="none" stroke="#40d840" stroke-width="1" vector-effect="non-scaling-stroke"/>
<path transform="translate(668.5,43.5) scale(1.0,1.0)" d="M0,0 V6 H5 Q6,6 6,5 V4 Q6,3 5,3 H0 M0,0 H5 Q6,0 6,1 V2 Q6,3 5,3" fill="none" stroke="#40d840" stroke-width="1" vector-effect="non-scaling-stroke"/>
<path transform="translate(676.5,43.5) scale(1.0,1.0)" d="M0,0 V6 H6" fill="none" stroke="#40d840" stroke-width="1" vector-effect="non-scaling-stroke"/>
<path transform="translate(684.5,43.5) scale(1.0,1.0)" d="M0,0 V6 M6,0 L0,4 M2,2.8 L6,6" fill="none" stroke="#40d840" stroke-width="1" vector-effect="non-scaling-stroke"/>
<path transform="translate(572.5,53.5) scale(1.0,1.0)" d="M0,0 V6 H3.5 Q6,6 6,3.5 V2.5 Q6,0 3.5,0 Z" fill="none" stroke="#e8a8a0" stroke-width="1" vector-effect="non-scaling-stroke"/>
<rect x="582" y="54" width="2" height="2" fill="#e8a8a0"/><rect x="582" y="58" width="2" height="2" fill="#e8a8a0"/>
<path transform="translate(588.5,53.5) scale(1.0,1.0)" d="M6,0 H0 V6 M0,3 H5" fill="none" stroke="#e8a8a0" stroke-width="1" vector-effect="non-scaling-stroke"/>
<path transform="translate(596.5,53.5) scale(1.0,1.0)" d="M1.5,0 H4.5 M3,0 V6 M1.5,6 H4.5" fill="none" stroke="#e8a8a0" stroke-width="1" vector-effect="non-scaling-stroke"/>
<path transform="translate(604.5,53.5) scale(1.0,1.0)" d="M0,0 L6,6 M6,0 L0,6" fill="none" stroke="#e8a8a0" stroke-width="1" vector-effect="non-scaling-stroke"/>
<path transform="translate(660.5,53.5) scale(1.0,1.0)" d="M0,6 L6,0" fill="none" stroke="#e8a8a0" stroke-width="1" vector-effect="non-scaling-stroke"/>
<path transform="translate(668.5,53.5) scale(1.0,1.0)" d="M0,0 V6 H5 Q6,6 6,5 V4 Q6,3 5,3 H0 M0,0 H5 Q6,0 6,1 V2 Q6,3 5,3" fill="none" stroke="#e8a8a0" stroke-width="1" vector-effect="non-scaling-stroke"/>
<path transform="translate(676.5,53.5) scale(1.0,1.0)" d="M0,0 V6 H6" fill="none" stroke="#e8a8a0" stroke-width="1" vector-effect="non-scaling-stroke"/>
<path transform="translate(684.5,53.5) scale(1.0,1.0)" d="M0,0 V6 M6,0 L0,4 M2,2.8 L6,6" fill="none" stroke="#e8a8a0" stroke-width="1" vector-effect="non-scaling-stroke"/>
<path transform="translate(572.5,63.5) scale(1.0,1.0)" d="M6,0 H0 V6 H6 M0,3 H5" fill="none" stroke="#5868d0" stroke-width="1" vector-effect="non-scaling-stroke"/>
<rect x="582" y="64" width="2" height="2" fill="#5868d0"/><rect x="582" y="68" width="2" height="2" fill="#5868d0"/>
<path transform="translate(588.5,63.5) scale(1.0,1.0)" d="M6,0 H0 V6 M0,3 H5" fill="none" stroke="#5868d0" stroke-width="1" vector-effect="non-scaling-stroke"/>
<path transform="translate(596.5,63.5) scale(1.0,1.0)" d="M1.5,0 H4.5 M3,0 V6 M1.5,6 H4.5" fill="none" stroke="#5868d0" stroke-width="1" vector-effect="non-scaling-stroke"/>
<path transform="translate(604.5,63.5) scale(1.0,1.0)" d="M0,0 L6,6 M6,0 L0,6" fill="none" stroke="#5868d0" stroke-width="1" vector-effect="non-scaling-stroke"/>
<path transform="translate(660.5,63.5) scale(1.0,1.0)" d="M0,6 L6,0" fill="none" stroke="#5868d0" stroke-width="1" vector-effect="non-scaling-stroke"/>
<path transform="translate(668.5,63.5) scale(1.0,1.0)" d="M0,0 V6 H5 Q6,6 6,5 V4 Q6,3 5,3 H0 M0,0 H5 Q6,0 6,1 V2 Q6,3 5,3" fill="none" stroke="#5868d0" stroke-width="1" vector-effect="non-scaling-stroke"/>
<path transform="translate(676.5,63.5) scale(1.0,1.0)" d="M0,0 V6 H6" fill="none" stroke="#5868d0" stroke-width="1" vector-effect="non-scaling-stroke"/>
<path transform="translate(684.5,63.5) scale(1.0,1.0)" d="M0,0 V6 M6,0 L0,4 M2,2.8 L6,6" fill="none" stroke="#5868d0" stroke-width="1" vector-effect="non-scaling-stroke"/>
<path transform="translate(572.5,73.5) scale(1.0,1.0)" d="M6,0 H0 V6 M0,3 H5" fill="none" stroke="#f0a840" stroke-width="1" vector-effect="non-scaling-stroke"/>
<rect x="582" y="74" width="2" height="2" fill="#f0a840"/><rect x="582" y="78" width="2" height="2" fill="#f0a840"/>
<path transform="translate(588.5,73.5) scale(1.0,1.0)" d="M6,0 H0 V6 M0,3 H5" fill="none" stroke="#f0a840" stroke-width="1" vector-effect="non-scaling-stroke"/>
<path transform="translate(596.5,73.5) scale(1.0,1.0)" d="M1.5,0 H4.5 M3,0 V6 M1.5,6 H4.5" fill="none" stroke="#f0a840" stroke-width="1" vector-effect="non-scaling-stroke"/>
<path transform="translate(604.5,73.5) scale(1.0,1.0)" d="M0,0 L6,6 M6,0 L0,6" fill="none" stroke="#f0a840" stroke-width="1" vector-effect="non-scaling-stroke"/>
<path transform="translate(660.5,73.5) scale(1.0,1.0)" d="M0,6 L6,0" fill="none" stroke="#f0a840" stroke-width="1" vector-effect="non-scaling-stroke"/>
<path transform="translate(668.5,73.5) scale(1.0,1.0)" d="M0,0 V6 H5 Q6,6 6,5 V4 Q6,3 5,3 H0 M0,0 H5 Q6,0 6,1 V2 Q6,3 5,3" fill="none" stroke="#f0a840" stroke-width="1" vector-effect="non-scaling-stroke"/>
<path transform="translate(676.5,73.5) scale(1.0,1.0)" d="M0,0 V6 H6" fill="none" stroke="#f0a840" stroke-width="1" vector-effect="non-scaling-stroke"/>
<path transform="translate(684.5,73.5) scale(1.0,1.0)" d="M0,0 V6 M6,0 L0,4 M2,2.8 L6,6" fill="none" stroke="#f0a840" stroke-width="1" vector-effect="non-scaling-stroke"/>
<path transform="translate(572.5,83.5) scale(1.0,1.0)" d="M6,1 Q6,0 5,0 H1 Q0,0 0,1 V5 Q0,6 1,6 H5 Q6,6 6,5 V3 H3" fill="none" stroke="#c8c8c8" stroke-width="1" vector-effect="non-scaling-stroke"/>
<rect x="582" y="84" width="2" height="2" fill="#c8c8c8"/><rect x="582" y="88" width="2" height="2" fill="#c8c8c8"/>
<path transform="translate(588.5,83.5) scale(1.0,1.0)" d="M6,0 H0 V6 M0,3 H5" fill="none" stroke="#c8c8c8" stroke-width="1" vector-effect="non-scaling-stroke"/>
<path transform="translate(596.5,83.5) scale(1.0,1.0)" d="M1.5,0 H4.5 M3,0 V6 M1.5,6 H4.5" fill="none" stroke="#c8c8c8" stroke-width="1" vector-effect="non-scaling-stroke"/>
<path transform="translate(604.5,83.5) scale(1.0,1.0)" d="M0,0 L6,6 M6,0 L0,6" fill="none" stroke="#c8c8c8" stroke-width="1" vector-effect="non-scaling-stroke"/>
<path transform="translate(660.5,83.5) scale(1.0,1.0)" d="M0,6 L6,0" fill="none" stroke="#c8c8c8" stroke-width="1" vector-effect="non-scaling-stroke"/>
<path transform="translate(668.5,83.5) scale(1.0,1.0)" d="M0,0 V6 H5 Q6,6 6,5 V4 Q6,3 5,3 H0 M0,0 H5 Q6,0 6,1 V2 Q6,3 5,3" fill="none" stroke="#c8c8c8" stroke-width="1" vector-effect="non-scaling-stroke"/>
<path transform="translate(676.5,83.5) scale(1.0,1.0)" d="M0,0 V6 H6" fill="none" stroke="#c8c8c8" stroke-width="1" vector-effect="non-scaling-stroke"/>
<path transform="translate(684.5,83.5) scale(1.0,1.0)" d="M0,0 V6 M6,0 L0,4 M2,2.8 L6,6" fill="none" stroke="#c8c8c8" stroke-width="1" vector-effect="non-scaling-stroke"/>
<rect x="2" y="97" width="647" height="24" fill="#000000" />
<rect x="2" y="121" width="647" height="1" fill="#ffffff" />
<rect x="649" y="97" width="1" height="25" fill="#ffffff" />
<path transform="translate(5.5,100.5) scale(1.0,1.0)" d="M6,0 L2,3 L6,6" fill="none" stroke="#ffffff" stroke-width="1" vector-effect="non-scaling-stroke"/>
<path transform="translate(13.5,100.5) scale(1.0,1.0)" d="M0,6 V0 L3,4 L6,0 V6" fill="none" stroke="#ffffff" stroke-width="1" vector-effect="non-scaling-stroke"/>
<path transform="translate(21.5,100.5) scale(1.0,1.0)" d="M6,0 H0 V6 H6 M0,3 H5" fill="none" stroke="#ffffff" stroke-width="1" vector-effect="non-scaling-stroke"/>
<path transform="translate(29.5,100.5) scale(1.0,1.0)" d="M0,6 V3.5 L2.5,0 H3.5 L6,3.5 V6 M0,3.5 H6" fill="none" stroke="#ffffff" stroke-width="1" vector-effect="non-scaling-stroke"/>
<path transform="translate(37.5,100.5) scale(1.0,1.0)" d="M6,1 Q6,0 5,0 H1 Q0,0 0,1 V2 Q0,3 1,3 H5 Q6,3 6,4 V5 Q6,6 5,6 H1 Q0,6 0,5" fill="none" stroke="#ffffff" stroke-width="1" vector-effect="non-scaling-stroke"/>
<path transform="translate(53.5,100.5) scale(1.0,1.0)" d="M6,1 Q6,0 5,0 H1 Q0,0 0,1 V5 Q0,6 1,6 H5 Q6,6 6,5" fill="none" stroke="#ffffff" stroke-width="1" vector-effect="non-scaling-stroke"/>
<path transform="translate(61.5,100.5) scale(1.0,1.0)" d="M1,0 H5 Q6,0 6,1 V5 Q6,6 5,6 H1 Q0,6 0,5 V1 Q0,0 1,0 Z" fill="none" stroke="#ffffff" stroke-width="1" vector-effect="non-scaling-stroke"/>
<path transform="translate(69.5,100.5) scale(1.0,1.0)" d="M0,6 V0 L6,6 V0" fill="none" stroke="#ffffff" stroke-width="1" vector-effect="non-scaling-stroke"/>
<path transform="translate(77.5,100.5) scale(1.0,1.0)" d="M0,0 V6 H3.5 Q6,6 6,3.5 V2.5 Q6,0 3.5,0 Z" fill="none" stroke="#ffffff" stroke-width="1" vector-effect="non-scaling-stroke"/>
<path transform="translate(85.5,100.5) scale(1.0,1.0)" d="M1.5,0 H4.5 M3,0 V6 M1.5,6 H4.5" fill="none" stroke="#ffffff" stroke-width="1" vector-effect="non-scaling-stroke"/>
<path transform="translate(93.5,100.5) scale(1.0,1.0)" d="M0,0 H6 M3,0 V6" fill="none" stroke="#ffffff" stroke-width="1" vector-effect="non-scaling-stroke"/>
<path transform="translate(101.5,100.5) scale(1.0,1.0)" d="M1.5,0 H4.5 M3,0 V6 M1.5,6 H4.5" fill="none" stroke="#ffffff" stroke-width="1" vector-effect="non-scaling-stroke"/>
<path transform="translate(109.5,100.5) scale(1.0,1.0)" d="M1,0 H5 Q6,0 6,1 V5 Q6,6 5,6 H1 Q0,6 0,5 V1 Q0,0 1,0 Z" fill="none" stroke="#ffffff" stroke-width="1" vector-effect="non-scaling-stroke"/>
<path transform="translate(117.5,100.5) scale(1.0,1.0)" d="M0,6 V0 L6,6 V0" fill="none" stroke="#ffffff" stroke-width="1" vector-effect="non-scaling-stroke"/>
<path transform="translate(125.5,100.5) scale(1.0,1.0)" d="M0,0 L4,3 L0,6" fill="none" stroke="#ffffff" stroke-width="1" vector-effect="non-scaling-stroke"/>
<path transform="translate(5.5,113.5) scale(1.0,1.0)" d="M6,1 Q6,0 5,0 H1 Q0,0 0,1 V2 Q0,3 1,3 H5 Q6,3 6,4 V5 Q6,6 5,6 H1 Q0,6 0,5" fill="none" stroke="#ffffff" stroke-width="1" vector-effect="non-scaling-stroke"/>
<path transform="translate(13.5,113.5) scale(1.0,1.0)" d="M0,0 H6 M3,0 V6" fill="none" stroke="#ffffff" stroke-width="1" vector-effect="non-scaling-stroke"/>
<path transform="translate(21.5,113.5) scale(1.0,1.0)" d="M0,6 V3.5 L2.5,0 H3.5 L6,3.5 V6 M0,3.5 H6" fill="none" stroke="#ffffff" stroke-width="1" vector-effect="non-scaling-stroke"/>
<path transform="translate(29.5,113.5) scale(1.0,1.0)" d="M0,6 V0 H5 Q6,0 6,1 V2 Q6,3 5,3 H0 M4,3 L6,6" fill="none" stroke="#ffffff" stroke-width="1" vector-effect="non-scaling-stroke"/>
<path transform="translate(37.5,113.5) scale(1.0,1.0)" d="M0,0 H6 M3,0 V6" fill="none" stroke="#ffffff" stroke-width="1" vector-effect="non-scaling-stroke"/>
<rect x="47" y="114" width="2" height="2" fill="#ffffff"/><rect x="47" y="118" width="2" height="2" fill="#ffffff"/>
<path transform="translate(54.50,109.5) scale(1.0,1.0)" d="M1,2 L3,0 V10 M1,10 H5" fill="none" stroke="#f8f860" stroke-width="1.0" vector-effect="non-scaling-stroke"/>
<path transform="translate(62.50,109.5) scale(1.0,1.0)" d="M1.5,0 H3.5 Q5,0 5,1.5 V8.5 Q5,10 3.5,10 H1.5 Q0,10 0,8.5 V1.5 Q0,0 1.5,0 Z M4.5,2 L0.5,8" fill="none" stroke="#f8f860" stroke-width="1.0" vector-effect="non-scaling-stroke"/>
<path transform="translate(70.50,109.5) scale(1.0,1.0)" d="M5,0 H0 V4 H2.5 Q5,4 5,7 Q5,10 2.5,10 Q0.5,10 0,8.5" fill="none" stroke="#f8f860" stroke-width="1.0" vector-effect="non-scaling-stroke"/>
<path transform="translate(78.50,109.5) scale(1.0,1.0)" d="M0,9 Q0.5,10 2,10 H3.5 Q5,10 5,8.5 V1.5 Q5,0 3.5,0 H1.5 Q0,0 0,1.5 V3.5 Q0,5 1.5,5 H5" fill="none" stroke="#f8f860" stroke-width="1.0" vector-effect="non-scaling-stroke"/>
<rect x="88.00" y="118" width="2" height="2" fill="#f8f860"/>
<path transform="translate(94.50,109.5) scale(1.0,1.0)" d="M1.5,0 H3.5 Q5,0 5,1.5 V8.5 Q5,10 3.5,10 H1.5 Q0,10 0,8.5 V1.5 Q0,0 1.5,0 Z M4.5,2 L0.5,8" fill="none" stroke="#f8f860" stroke-width="1.0" vector-effect="non-scaling-stroke"/>
<path transform="translate(102.50,109.5) scale(1.0,1.0)" d="M1.5,0 H3.5 Q5,0 5,1.5 V8.5 Q5,10 3.5,10 H1.5 Q0,10 0,8.5 V1.5 Q0,0 1.5,0 Z M4.5,2 L0.5,8" fill="none" stroke="#f8f860" stroke-width="1.0" vector-effect="non-scaling-stroke"/>
<path transform="translate(110.50,109.5) scale(1.0,1.0)" d="M1.5,0 H3.5 Q5,0 5,1.5 V8.5 Q5,10 3.5,10 H1.5 Q0,10 0,8.5 V1.5 Q0,0 1.5,0 Z M4.5,2 L0.5,8" fill="none" stroke="#f8f860" stroke-width="1.0" vector-effect="non-scaling-stroke"/>
<path transform="translate(118.50,109.5) scale(1.0,1.0)" d="M0,2 V10 M-0.5,2 H5 V10" fill="none" stroke="#f8f860" stroke-width="1.0" vector-effect="non-scaling-stroke"/>
<path transform="translate(126.50,109.5) scale(1.0,1.0)" d="M0,2 V10 M0,2 H6 V10 M3,2 V10" fill="none" stroke="#f8f860" stroke-width="1.0" vector-effect="non-scaling-stroke"/>
<path transform="translate(173.5,113.5) scale(1.0,1.0)" d="M6,1 Q6,0 5,0 H1 Q0,0 0,1 V2 Q0,3 1,3 H5 Q6,3 6,4 V5 Q6,6 5,6 H1 Q0,6 0,5" fill="none" stroke="#ffffff" stroke-width="1" vector-effect="non-scaling-stroke"/>
<path transform="translate(181.5,113.5) scale(1.0,1.0)" d="M0,0 H6 M3,0 V6" fill="none" stroke="#ffffff" stroke-width="1" vector-effect="non-scaling-stroke"/>
<path transform="translate(189.5,113.5) scale(1.0,1.0)" d="M1,0 H5 Q6,0 6,1 V5 Q6,6 5,6 H1 Q0,6 0,5 V1 Q0,0 1,0 Z" fill="none" stroke="#ffffff" stroke-width="1" vector-effect="non-scaling-stroke"/>
<path transform="translate(197.5,113.5) scale(1.0,1.0)" d="M0,6 V0 H5 Q6,0 6,1 V2 Q6,3 5,3 H0" fill="none" stroke="#ffffff" stroke-width="1" vector-effect="non-scaling-stroke"/>
<rect x="207" y="114" width="2" height="2" fill="#ffffff"/><rect x="207" y="118" width="2" height="2" fill="#ffffff"/>
<path transform="translate(214.50,109.5) scale(1.0,1.0)" d="M1,2 L3,0 V10 M1,10 H5" fill="none" stroke="#f8f860" stroke-width="1.0" vector-effect="non-scaling-stroke"/>
<path transform="translate(222.50,109.5) scale(1.0,1.0)" d="M1.5,0 H3.5 Q5,0 5,1.5 V8.5 Q5,10 3.5,10 H1.5 Q0,10 0,8.5 V1.5 Q0,0 1.5,0 Z M4.5,2 L0.5,8" fill="none" stroke="#f8f860" stroke-width="1.0" vector-effect="non-scaling-stroke"/>
<path transform="translate(230.50,109.5) scale(1.0,1.0)" d="M5,1 Q4.5,0 3,0 H1.5 Q0,0 0,1.5 V8.5 Q0,10 1.5,10 H3.5 Q5,10 5,8.5 V6.5 Q5,5 3.5,5 H0" fill="none" stroke="#f8f860" stroke-width="1.0" vector-effect="non-scaling-stroke"/>
<path transform="translate(238.50,109.5) scale(1.0,1.0)" d="M0,9 Q0.5,10 2,10 H3.5 Q5,10 5,8.5 V1.5 Q5,0 3.5,0 H1.5 Q0,0 0,1.5 V3.5 Q0,5 1.5,5 H5" fill="none" stroke="#f8f860" stroke-width="1.0" vector-effect="non-scaling-stroke"/>
<rect x="248.00" y="118" width="2" height="2" fill="#f8f860"/>
<path transform="translate(254.50,109.5) scale(1.0,1.0)" d="M1.5,0 H3.5 Q5,0 5,1.5 V8.5 Q5,10 3.5,10 H1.5 Q0,10 0,8.5 V1.5 Q0,0 1.5,0 Z M4.5,2 L0.5,8" fill="none" stroke="#f8f860" stroke-width="1.0" vector-effect="non-scaling-stroke"/>
<path transform="translate(262.50,109.5) scale(1.0,1.0)" d="M1.5,0 H3.5 Q5,0 5,1.5 V8.5 Q5,10 3.5,10 H1.5 Q0,10 0,8.5 V1.5 Q0,0 1.5,0 Z M4.5,2 L0.5,8" fill="none" stroke="#f8f860" stroke-width="1.0" vector-effect="non-scaling-stroke"/>
<path transform="translate(270.50,109.5) scale(1.0,1.0)" d="M1.5,0 H3.5 Q5,0 5,1.5 V8.5 Q5,10 3.5,10 H1.5 Q0,10 0,8.5 V1.5 Q0,0 1.5,0 Z M4.5,2 L0.5,8" fill="none" stroke="#f8f860" stroke-width="1.0" vector-effect="non-scaling-stroke"/>
<path transform="translate(278.50,109.5) scale(1.0,1.0)" d="M0,2 V10 M-0.5,2 H5 V10" fill="none" stroke="#f8f860" stroke-width="1.0" vector-effect="non-scaling-stroke"/>
<path transform="translate(286.50,109.5) scale(1.0,1.0)" d="M0,2 V10 M0,2 H6 V10 M3,2 V10" fill="none" stroke="#f8f860" stroke-width="1.0" vector-effect="non-scaling-stroke"/>
<path transform="translate(325.5,113.5) scale(1.0,1.0)" d="M6,1 Q6,0 5,0 H1 Q0,0 0,1 V5 Q0,6 1,6 H5 Q6,6 6,5" fill="none" stroke="#ffffff" stroke-width="1" vector-effect="non-scaling-stroke"/>
<path transform="translate(333.5,113.5) scale(1.0,1.0)" d="M6,0 H0 V6 H6 M0,3 H5" fill="none" stroke="#ffffff" stroke-width="1" vector-effect="non-scaling-stroke"/>
<path transform="translate(341.5,113.5) scale(1.0,1.0)" d="M0,6 V0 L6,6 V0" fill="none" stroke="#ffffff" stroke-width="1" vector-effect="non-scaling-stroke"/>
<path transform="translate(349.5,113.5) scale(1.0,1.0)" d="M0,0 H6 M3,0 V6" fill="none" stroke="#ffffff" stroke-width="1" vector-effect="non-scaling-stroke"/>
<path transform="translate(357.5,113.5) scale(1.0,1.0)" d="M6,0 H0 V6 H6 M0,3 H5" fill="none" stroke="#ffffff" stroke-width="1" vector-effect="non-scaling-stroke"/>
<path transform="translate(365.5,113.5) scale(1.0,1.0)" d="M0,6 V0 H5 Q6,0 6,1 V2 Q6,3 5,3 H0 M4,3 L6,6" fill="none" stroke="#ffffff" stroke-width="1" vector-effect="non-scaling-stroke"/>
<rect x="375" y="114" width="2" height="2" fill="#ffffff"/><rect x="375" y="118" width="2" height="2" fill="#ffffff"/>
<path transform="translate(382.50,109.5) scale(1.0,1.0)" d="M1,2 L3,0 V10 M1,10 H5" fill="none" stroke="#f8f860" stroke-width="1.0" vector-effect="non-scaling-stroke"/>
<path transform="translate(390.50,109.5) scale(1.0,1.0)" d="M1.5,0 H3.5 Q5,0 5,1.5 V8.5 Q5,10 3.5,10 H1.5 Q0,10 0,8.5 V1.5 Q0,0 1.5,0 Z M4.5,2 L0.5,8" fill="none" stroke="#f8f860" stroke-width="1.0" vector-effect="non-scaling-stroke"/>
<path transform="translate(398.50,109.5) scale(1.0,1.0)" d="M5,1 Q4.5,0 3,0 H1.5 Q0,0 0,1.5 V8.5 Q0,10 1.5,10 H3.5 Q5,10 5,8.5 V6.5 Q5,5 3.5,5 H0" fill="none" stroke="#f8f860" stroke-width="1.0" vector-effect="non-scaling-stroke"/>
<path transform="translate(406.50,109.5) scale(1.0,1.0)" d="M4,10 V0 L0,7 H5" fill="none" stroke="#f8f860" stroke-width="1.0" vector-effect="non-scaling-stroke"/>
<rect x="416.00" y="118" width="2" height="2" fill="#f8f860"/>
<path transform="translate(422.50,109.5) scale(1.0,1.0)" d="M1.5,0 H3.5 Q5,0 5,1.5 V8.5 Q5,10 3.5,10 H1.5 Q0,10 0,8.5 V1.5 Q0,0 1.5,0 Z M4.5,2 L0.5,8" fill="none" stroke="#f8f860" stroke-width="1.0" vector-effect="non-scaling-stroke"/>
<path transform="translate(430.50,109.5) scale(1.0,1.0)" d="M1.5,0 H3.5 Q5,0 5,1.5 V8.5 Q5,10 3.5,10 H1.5 Q0,10 0,8.5 V1.5 Q0,0 1.5,0 Z M4.5,2 L0.5,8" fill="none" stroke="#f8f860" stroke-width="1.0" vector-effect="non-scaling-stroke"/>
<path transform="translate(438.50,109.5) scale(1.0,1.0)" d="M1.5,0 H3.5 Q5,0 5,1.5 V8.5 Q5,10 3.5,10 H1.5 Q0,10 0,8.5 V1.5 Q0,0 1.5,0 Z M4.5,2 L0.5,8" fill="none" stroke="#f8f860" stroke-width="1.0" vector-effect="non-scaling-stroke"/>
<path transform="translate(446.50,109.5) scale(1.0,1.0)" d="M0,2 V10 M-0.5,2 H5 V10" fill="none" stroke="#f8f860" stroke-width="1.0" vector-effect="non-scaling-stroke"/>
<path transform="translate(454.50,109.5) scale(1.0,1.0)" d="M0,2 V10 M0,2 H6 V10 M3,2 V10" fill="none" stroke="#f8f860" stroke-width="1.0" vector-effect="non-scaling-stroke"/>
<path transform="translate(493.5,113.5) scale(1.0,1.0)" d="M6,1 Q6,0 5,0 H1 Q0,0 0,1 V2 Q0,3 1,3 H5 Q6,3 6,4 V5 Q6,6 5,6 H1 Q0,6 0,5" fill="none" stroke="#ffffff" stroke-width="1" vector-effect="non-scaling-stroke"/>
<path transform="translate(501.5,113.5) scale(1.0,1.0)" d="M0,6 V0 H5 Q6,0 6,1 V2 Q6,3 5,3 H0" fill="none" stroke="#ffffff" stroke-width="1" vector-effect="non-scaling-stroke"/>
<path transform="translate(509.5,113.5) scale(1.0,1.0)" d="M0,6 V3.5 L2.5,0 H3.5 L6,3.5 V6 M0,3.5 H6" fill="none" stroke="#ffffff" stroke-width="1" vector-effect="non-scaling-stroke"/>
<path transform="translate(517.5,113.5) scale(1.0,1.0)" d="M0,6 V0 L6,6 V0" fill="none" stroke="#ffffff" stroke-width="1" vector-effect="non-scaling-stroke"/>
<rect x="527" y="114" width="2" height="2" fill="#ffffff"/><rect x="527" y="118" width="2" height="2" fill="#ffffff"/>
<path transform="translate(550.50,109.5) scale(1.0,1.0)" d="M1,2 L3,0 V10 M1,10 H5" fill="none" stroke="#f8f860" stroke-width="1.0" vector-effect="non-scaling-stroke"/>
<path transform="translate(558.50,109.5) scale(1.0,1.0)" d="M1.5,0 H3.5 Q5,0 5,1.5 V8.5 Q5,10 3.5,10 H1.5 Q0,10 0,8.5 V1.5 Q0,0 1.5,0 Z M4.5,2 L0.5,8" fill="none" stroke="#f8f860" stroke-width="1.0" vector-effect="non-scaling-stroke"/>
<rect x="568.00" y="118" width="2" height="2" fill="#f8f860"/>
<path transform="translate(574.50,109.5) scale(1.0,1.0)" d="M1.5,0 H3.5 Q5,0 5,1.5 V8.5 Q5,10 3.5,10 H1.5 Q0,10 0,8.5 V1.5 Q0,0 1.5,0 Z M4.5,2 L0.5,8" fill="none" stroke="#f8f860" stroke-width="1.0" vector-effect="non-scaling-stroke"/>
<path transform="translate(582.50,109.5) scale(1.0,1.0)" d="M0,2 V10 M-0.5,2 H5 V10" fill="none" stroke="#f8f860" stroke-width="1.0" vector-effect="non-scaling-stroke"/>
<path transform="translate(590.50,109.5) scale(1.0,1.0)" d="M0,2 V10 M0,2 H6 V10 M3,2 V10" fill="none" stroke="#f8f860" stroke-width="1.0" vector-effect="non-scaling-stroke"/>
<rect x="45" y="131" width="36" height="15" fill="#000000" />
<rect x="46" y="132" width="34" height="13" fill="#ffffff" />
<path transform="translate(47.50,133.5) scale(1.0,1.0)" d="M1,2 L3,0 V10 M1,10 H5" fill="none" stroke="#000000" stroke-width="1.0" vector-effect="non-scaling-stroke"/>
<path transform="translate(55.50,133.5) scale(1.0,1.0)" d="M1.5,0 H3.5 Q5,0 5,1.5 V8.5 Q5,10 3.5,10 H1.5 Q0,10 0,8.5 V1.5 Q0,0 1.5,0 Z M4.5,2 L0.5,8" fill="none" stroke="#000000" stroke-width="1.0" vector-effect="non-scaling-stroke"/>
<rect x="65.00" y="142" width="2" height="2" fill="#000000"/>
<path transform="translate(71.50,133.5) scale(1.0,1.0)" d="M1.5,0 H3.5 Q5,0 5,1.5 V8.5 Q5,10 3.5,10 H1.5 Q0,10 0,8.5 V1.5 Q0,0 1.5,0 Z M4.5,2 L0.5,8" fill="none" stroke="#000000" stroke-width="1.0" vector-effect="non-scaling-stroke"/>
<path transform="translate(84.5,136.5) scale(1.0,1.0)" d="M6,0 V6 H2 Q0,6 0,4.5 V4 Q0,2.5 2,2.5 H6" fill="none" stroke="#ffffff" stroke-width="1" vector-effect="non-scaling-stroke"/>
<path transform="translate(92.5,136.5) scale(1.0,1.0)" d="M0,0 V6 H5 Q6,6 6,5 V4 Q6,3 5,3 H0 M0,0 H5 Q6,0 6,1 V2 Q6,3 5,3" fill="none" stroke="#ffffff" stroke-width="1" vector-effect="non-scaling-stroke"/>
<path transform="translate(100.5,136.5) scale(1.0,1.0)" d="M0,6 L6,0" fill="none" stroke="#ffffff" stroke-width="1" vector-effect="non-scaling-stroke"/>
<path transform="translate(108.5,136.5) scale(1.0,1.0)" d="M0,0 V6 H3.5 Q6,6 6,3.5 V2.5 Q6,0 3.5,0 Z" fill="none" stroke="#ffffff" stroke-width="1" vector-effect="non-scaling-stroke"/>
<path transform="translate(180.5,136.5) scale(1.0,1.0)" d="M0,6 V0 H5 Q6,0 6,1 V2 Q6,3 5,3 H0 M4,3 L6,6" fill="none" stroke="#ffffff" stroke-width="1" vector-effect="non-scaling-stroke"/>
<path transform="translate(188.5,136.5) scale(1.0,1.0)" d="M6,0 H0 V6 H6 M0,3 H5" fill="none" stroke="#ffffff" stroke-width="1" vector-effect="non-scaling-stroke"/>
<path transform="translate(196.5,136.5) scale(1.0,1.0)" d="M6,1 Q6,0 5,0 H1 Q0,0 0,1 V2 Q0,3 1,3 H5 Q6,3 6,4 V5 Q6,6 5,6 H1 Q0,6 0,5" fill="none" stroke="#ffffff" stroke-width="1" vector-effect="non-scaling-stroke"/>
<rect x="206" y="137" width="2" height="2" fill="#ffffff"/><rect x="206" y="141" width="2" height="2" fill="#ffffff"/>
<rect x="212" y="131" width="44" height="15" fill="#000000" />
<rect x="213" y="132" width="42" height="13" fill="#ffffff" />
<path transform="translate(214.50,133.5) scale(1.0,1.0)" d="M1.5,0 H3.5 Q5,0 5,1.5 V8.5 Q5,10 3.5,10 H1.5 Q0,10 0,8.5 V1.5 Q0,0 1.5,0 Z M4.5,2 L0.5,8" fill="none" stroke="#000000" stroke-width="1.0" vector-effect="non-scaling-stroke"/>
<rect x="224.00" y="142" width="2" height="2" fill="#000000"/>
<path transform="translate(230.50,133.5) scale(1.0,1.0)" d="M1.5,0 H3.5 Q5,0 5,1.5 V8.5 Q5,10 3.5,10 H1.5 Q0,10 0,8.5 V1.5 Q0,0 1.5,0 Z M4.5,2 L0.5,8" fill="none" stroke="#000000" stroke-width="1.0" vector-effect="non-scaling-stroke"/>
<path transform="translate(238.50,133.5) scale(1.0,1.0)" d="M0,2.5 Q0,0 2.5,0 Q5,0 5,2.5 Q5,4.5 2.5,6.5 Q0,8.5 0,10 H5" fill="none" stroke="#000000" stroke-width="1.0" vector-effect="non-scaling-stroke"/>
<path transform="translate(246.50,133.5) scale(1.0,1.0)" d="M1.5,0 H3.5 Q5,0 5,1.5 V8.5 Q5,10 3.5,10 H1.5 Q0,10 0,8.5 V1.5 Q0,0 1.5,0 Z M4.5,2 L0.5,8" fill="none" stroke="#000000" stroke-width="1.0" vector-effect="non-scaling-stroke"/>
<path transform="translate(258.5,136.5) scale(1.0,1.0)" d="M1,1 V6 M0,1 H6 V6" fill="none" stroke="#ffffff" stroke-width="1" vector-effect="non-scaling-stroke"/>
<path transform="translate(266.5,136.5) scale(1.0,1.0)" d="M0,1 V6 M0,1 H6 V6 M3,1 V6" fill="none" stroke="#ffffff" stroke-width="1" vector-effect="non-scaling-stroke"/>
<path transform="translate(292.5,136.5) scale(1.0,1.0)" d="M6,1 Q6,0 5,0 H1 Q0,0 0,1 V2 Q0,3 1,3 H5 Q6,3 6,4 V5 Q6,6 5,6 H1 Q0,6 0,5" fill="none" stroke="#ffffff" stroke-width="1" vector-effect="non-scaling-stroke"/>
<path transform="translate(300.5,136.5) scale(1.0,1.0)" d="M6,0 H0 V6 H6 M0,3 H5" fill="none" stroke="#ffffff" stroke-width="1" vector-effect="non-scaling-stroke"/>
<path transform="translate(308.5,136.5) scale(1.0,1.0)" d="M0,6 V0 L6,6 V0" fill="none" stroke="#ffffff" stroke-width="1" vector-effect="non-scaling-stroke"/>
<path transform="translate(316.5,136.5) scale(1.0,1.0)" d="M6,1 Q6,0 5,0 H1 Q0,0 0,1 V2 Q0,3 1,3 H5 Q6,3 6,4 V5 Q6,6 5,6 H1 Q0,6 0,5" fill="none" stroke="#ffffff" stroke-width="1" vector-effect="non-scaling-stroke"/>
<rect x="326" y="137" width="2" height="2" fill="#ffffff"/><rect x="326" y="141" width="2" height="2" fill="#ffffff"/>
<rect x="333" y="131" width="84" height="15" fill="#000000" />
<rect x="334" y="132" width="82" height="13" fill="#ffffff" />
<path transform="translate(335.50,133.5) scale(1.0,1.0)" d="M0,10 V0 L2.5,6 L5,0 V10" fill="none" stroke="#000000" stroke-width="1.0" vector-effect="non-scaling-stroke"/>
<path transform="translate(343.50,133.5) scale(1.0,1.0)" d="M1,0 H5 M3,0 V10 M1,10 H5" fill="none" stroke="#000000" stroke-width="1.0" vector-effect="non-scaling-stroke"/>
<path transform="translate(351.50,133.5) scale(1.0,1.0)" d="M0,0 V10 H2 Q5,10 5,7 V3 Q5,0 2,0 Z" fill="none" stroke="#000000" stroke-width="1.0" vector-effect="non-scaling-stroke"/>
<path transform="translate(436.5,136.5) scale(1.0,1.0)" d="M0,6 V3.5 L2.5,0 H3.5 L6,3.5 V6 M0,3.5 H6" fill="none" stroke="#ffffff" stroke-width="1" vector-effect="non-scaling-stroke"/>
<path transform="translate(444.5,136.5) scale(1.0,1.0)" d="M0,0 L3,6 L6,0" fill="none" stroke="#ffffff" stroke-width="1" vector-effect="non-scaling-stroke"/>
<path transform="translate(452.5,136.5) scale(1.0,1.0)" d="M6,1 Q6,0 5,0 H1 Q0,0 0,1 V5 Q0,6 1,6 H5 Q6,6 6,5 V3 H3" fill="none" stroke="#ffffff" stroke-width="1" vector-effect="non-scaling-stroke"/>
<rect x="462" y="137" width="2" height="2" fill="#ffffff"/><rect x="462" y="141" width="2" height="2" fill="#ffffff"/>
<rect x="469" y="131" width="29" height="15" fill="#000000" />
<rect x="470" y="132" width="27" height="13" fill="#ffffff" />
<path transform="translate(488.50,133.5) scale(1.0,1.0)" d="M1,2 L3,0 V10 M1,10 H5" fill="none" stroke="#000000" stroke-width="1.0" vector-effect="non-scaling-stroke"/>
<path transform="translate(516.5,136.5) scale(1.0,1.0)" d="M6,1 Q6,0 5,0 H1 Q0,0 0,1 V2 Q0,3 1,3 H5 Q6,3 6,4 V5 Q6,6 5,6 H1 Q0,6 0,5" fill="none" stroke="#ffffff" stroke-width="1" vector-effect="non-scaling-stroke"/>
<path transform="translate(524.5,136.5) scale(1.0,1.0)" d="M0,6 V0 L3,4 L6,0 V6" fill="none" stroke="#ffffff" stroke-width="1" vector-effect="non-scaling-stroke"/>
<path transform="translate(532.5,136.5) scale(1.0,1.0)" d="M0,6 V0 H5 Q6,0 6,1 V2 Q6,3 5,3 H0" fill="none" stroke="#ffffff" stroke-width="1" vector-effect="non-scaling-stroke"/>
<path transform="translate(540.5,136.5) scale(1.0,1.0)" d="M0,0 V6 H6" fill="none" stroke="#ffffff" stroke-width="1" vector-effect="non-scaling-stroke"/>
<rect x="550" y="137" width="2" height="2" fill="#ffffff"/><rect x="550" y="141" width="2" height="2" fill="#ffffff"/>
<rect x="557" y="131" width="91" height="15" fill="#000000" />
<rect x="558" y="132" width="89" height="13" fill="#ffffff" />
<path transform="translate(566.50,133.5) scale(1.0,1.0)" d="M0,2.5 Q0,0 2.5,0 Q5,0 5,2.5 Q5,4.5 2.5,6.5 Q0,8.5 0,10 H5" fill="none" stroke="#000000" stroke-width="1.0" vector-effect="non-scaling-stroke"/>
<path transform="translate(574.50,133.5) scale(1.0,1.0)" d="M5,0 H0 V4 H2.5 Q5,4 5,7 Q5,10 2.5,10 Q0.5,10 0,8.5" fill="none" stroke="#000000" stroke-width="1.0" vector-effect="non-scaling-stroke"/>
<path transform="translate(582.50,133.5) scale(1.0,1.0)" d="M1.5,0 H3.5 Q5,0 5,1.5 V8.5 Q5,10 3.5,10 H1.5 Q0,10 0,8.5 V1.5 Q0,0 1.5,0 Z M4.5,2 L0.5,8" fill="none" stroke="#000000" stroke-width="1.0" vector-effect="non-scaling-stroke"/>
<path transform="translate(590.50,133.5) scale(1.0,1.0)" d="M1,2 L3,0 V10 M1,10 H5" fill="none" stroke="#000000" stroke-width="1.0" vector-effect="non-scaling-stroke"/>
<path transform="translate(598.50,133.5) scale(1.0,1.0)" d="M4,0 Q1.5,2.5 1.5,5 Q1.5,7.5 4,10" fill="none" stroke="#000000" stroke-width="1.0" vector-effect="non-scaling-stroke"/>
<path transform="translate(606.50,133.5) scale(1.0,1.0)" d="M0,10 V3.5 L2.5,0 L5,3.5 V10 M0,6 H5" fill="none" stroke="#000000" stroke-width="1.0" vector-effect="non-scaling-stroke"/>
<path transform="translate(614.50,133.5) scale(1.0,1.0)" d="M0,0 V7.5 Q0,10 2.5,10 Q5,10 5,7.5 V0" fill="none" stroke="#000000" stroke-width="1.0" vector-effect="non-scaling-stroke"/>
<path transform="translate(622.50,133.5) scale(1.0,1.0)" d="M0,0 H6 M3,0 V10" fill="none" stroke="#000000" stroke-width="1.0" vector-effect="non-scaling-stroke"/>
<path transform="translate(630.50,133.5) scale(1.0,1.0)" d="M1.5,0 H3.5 Q5,0 5,1.5 V8.5 Q5,10 3.5,10 H1.5 Q0,10 0,8.5 V1.5 Q0,0 1.5,0 Z" fill="none" stroke="#000000" stroke-width="1.0" vector-effect="non-scaling-stroke"/>
<path transform="translate(638.50,133.5) scale(1.0,1.0)" d="M1,0 Q3.5,2.5 3.5,5 Q3.5,7.5 1,10" fill="none" stroke="#000000" stroke-width="1.0" vector-effect="non-scaling-stroke"/>
<rect x="45" y="148" width="603" height="403" fill="#000000" />
<path d="M107.5,150 V551 M167.5,150 V551 M227.5,150 V551 M287.5,150 V551 M347.5,150 V551 M407.5,150 V551 M467.5,150 V551 M527.5,150 V551 M587.5,150 V551 M49,190.5 H647 M49,230.5 H647 M49,270.5 H647 M49,310.5 H647 M49,350.5 H647 M49,390.5 H647 M49,430.5 H647 M49,470.5 H647 M49,510.5 H647" stroke="#a0a0a0" stroke-width="1" stroke-dasharray="3 3" fill="none"/>
<rect x="45" y="551" width="605" height="2" fill="#ffffff" />
<rect x="648" y="148" width="2" height="407" fill="#ffffff" />
<rect x="347" y="553" width="1" height="2" fill="#ffffff" />
<rect x="45" y="552" width="2" height="3" fill="#ffffff" />
<path transform="translate(25.50,145.5) scale(0.8,1.0)" d="M0,9 Q0.5,10 2,10 H3.5 Q5,10 5,8.5 V1.5 Q5,0 3.5,0 H1.5 Q0,0 0,1.5 V3.5 Q0,5 1.5,5 H5" fill="none" stroke="#ffffff" stroke-width="1.0" vector-effect="non-scaling-stroke"/>
<rect x="32.60" y="154" width="2" height="2" fill="#ffffff"/>
<path transform="translate(37.50,145.5) scale(0.8,1.0)" d="M0,2.5 Q0,0 2.5,0 Q5,0 5,2.5 Q5,4.5 2.5,6.5 Q0,8.5 0,10 H5" fill="none" stroke="#ffffff" stroke-width="1.0" vector-effect="non-scaling-stroke"/>
<rect x="3" y="223" width="38" height="15" fill="#000000" />
<rect x="4" y="224" width="36" height="13" fill="#ffffff" />
<path transform="translate(11.50,225.5) scale(0.8,1.0)" d="M0,5 H5" fill="none" stroke="#000000" stroke-width="1.0" vector-effect="non-scaling-stroke"/>
<path transform="translate(17.50,225.5) scale(0.8,1.0)" d="M1,2 L3,0 V10 M1,10 H5" fill="none" stroke="#000000" stroke-width="1.0" vector-effect="non-scaling-stroke"/>
<path transform="translate(23.50,225.5) scale(0.8,1.0)" d="M1.5,0 H3.5 Q5,0 5,1.5 V8.5 Q5,10 3.5,10 H1.5 Q0,10 0,8.5 V1.5 Q0,0 1.5,0 Z M4.5,2 L0.5,8" fill="none" stroke="#000000" stroke-width="1.0" vector-effect="non-scaling-stroke"/>
<rect x="30.60" y="234" width="2" height="2" fill="#000000"/>
<path transform="translate(35.50,225.5) scale(0.8,1.0)" d="M1.5,0 H3.5 Q5,0 5,1.5 V3.5 Q5,5 3.5,5 H1.5 Q0,5 0,3.5 V1.5 Q0,0 1.5,0 Z M1.5,5 H3.5 Q5,5 5,6.5 V8.5 Q5,10 3.5,10 H1.5 Q0,10 0,8.5 V6.5 Q0,5 1.5,5 Z" fill="none" stroke="#000000" stroke-width="1.0" vector-effect="non-scaling-stroke"/>
<path transform="translate(49.5,227.5) scale(1.0,1.0)" d="M0,6 V0 H5 Q6,0 6,1 V2 Q6,3 5,3 H0 M4,3 L6,6" fill="none" stroke="#ffffff" stroke-width="1" vector-effect="non-scaling-stroke"/>
<path transform="translate(57.5,227.5) scale(1.0,1.0)" d="M6,0 H0 V6 H6 M0,3 H5" fill="none" stroke="#ffffff" stroke-width="1" vector-effect="non-scaling-stroke"/>
<path transform="translate(65.5,227.5) scale(1.0,1.0)" d="M6,0 H0 V6 M0,3 H5" fill="none" stroke="#ffffff" stroke-width="1" vector-effect="non-scaling-stroke"/>
<path transform="translate(19.5,241.5) scale(1.0,1.0)" d="M6,0 V6 H2 Q0,6 0,4.5 V4 Q0,2.5 2,2.5 H6" fill="none" stroke="#ffffff" stroke-width="1" vector-effect="non-scaling-stroke"/>
<path transform="translate(27.5,241.5) scale(1.0,1.0)" d="M0,0 V6 H5 Q6,6 6,5 V4 Q6,3 5,3 H0 M0,0 H5 Q6,0 6,1 V2 Q6,3 5,3" fill="none" stroke="#ffffff" stroke-width="1" vector-effect="non-scaling-stroke"/>
<path transform="translate(35.5,241.5) scale(1.0,1.0)" d="M0,1 V6 M0,1 H6 V6 M3,1 V6" fill="none" stroke="#ffffff" stroke-width="1" vector-effect="non-scaling-stroke"/>
<path transform="translate(13.50,305.5) scale(0.8,1.0)" d="M0,5 H5" fill="none" stroke="#ffffff" stroke-width="1.0" vector-effect="non-scaling-stroke"/>
<path transform="translate(19.50,305.5) scale(0.8,1.0)" d="M0,1.5 Q0.5,0 2.5,0 Q5,0 5,2.5 Q5,5 2.5,5 H1.5 M2.5,5 Q5,5 5,7.5 Q5,10 2.5,10 Q0.5,10 0,8.5" fill="none" stroke="#ffffff" stroke-width="1.0" vector-effect="non-scaling-stroke"/>
<path transform="translate(25.50,305.5) scale(0.8,1.0)" d="M1.5,0 H3.5 Q5,0 5,1.5 V8.5 Q5,10 3.5,10 H1.5 Q0,10 0,8.5 V1.5 Q0,0 1.5,0 Z M4.5,2 L0.5,8" fill="none" stroke="#ffffff" stroke-width="1.0" vector-effect="non-scaling-stroke"/>
<rect x="32.60" y="314" width="2" height="2" fill="#ffffff"/>
<path transform="translate(37.50,305.5) scale(0.8,1.0)" d="M1.5,0 H3.5 Q5,0 5,1.5 V3.5 Q5,5 3.5,5 H1.5 Q0,5 0,3.5 V1.5 Q0,0 1.5,0 Z M1.5,5 H3.5 Q5,5 5,6.5 V8.5 Q5,10 3.5,10 H1.5 Q0,10 0,8.5 V6.5 Q0,5 1.5,5 Z" fill="none" stroke="#ffffff" stroke-width="1.0" vector-effect="non-scaling-stroke"/>
<path transform="translate(13.50,385.5) scale(0.8,1.0)" d="M0,5 H5" fill="none" stroke="#ffffff" stroke-width="1.0" vector-effect="non-scaling-stroke"/>
<path transform="translate(19.50,385.5) scale(0.8,1.0)" d="M5,0 H0 V4 H2.5 Q5,4 5,7 Q5,10 2.5,10 Q0.5,10 0,8.5" fill="none" stroke="#ffffff" stroke-width="1.0" vector-effect="non-scaling-stroke"/>
<path transform="translate(25.50,385.5) scale(0.8,1.0)" d="M1.5,0 H3.5 Q5,0 5,1.5 V8.5 Q5,10 3.5,10 H1.5 Q0,10 0,8.5 V1.5 Q0,0 1.5,0 Z M4.5,2 L0.5,8" fill="none" stroke="#ffffff" stroke-width="1.0" vector-effect="non-scaling-stroke"/>
<rect x="32.60" y="394" width="2" height="2" fill="#ffffff"/>
<path transform="translate(37.50,385.5) scale(0.8,1.0)" d="M1.5,0 H3.5 Q5,0 5,1.5 V3.5 Q5,5 3.5,5 H1.5 Q0,5 0,3.5 V1.5 Q0,0 1.5,0 Z M1.5,5 H3.5 Q5,5 5,6.5 V8.5 Q5,10 3.5,10 H1.5 Q0,10 0,8.5 V6.5 Q0,5 1.5,5 Z" fill="none" stroke="#ffffff" stroke-width="1.0" vector-effect="non-scaling-stroke"/>
<path transform="translate(13.50,465.5) scale(0.8,1.0)" d="M0,5 H5" fill="none" stroke="#ffffff" stroke-width="1.0" vector-effect="non-scaling-stroke"/>
<path transform="translate(19.50,465.5) scale(0.8,1.0)" d="M0,0 H5 L2,10" fill="none" stroke="#ffffff" stroke-width="1.0" vector-effect="non-scaling-stroke"/>
<path transform="translate(25.50,465.5) scale(0.8,1.0)" d="M1.5,0 H3.5 Q5,0 5,1.5 V8.5 Q5,10 3.5,10 H1.5 Q0,10 0,8.5 V1.5 Q0,0 1.5,0 Z M4.5,2 L0.5,8" fill="none" stroke="#ffffff" stroke-width="1.0" vector-effect="non-scaling-stroke"/>
<rect x="32.60" y="474" width="2" height="2" fill="#ffffff"/>
<path transform="translate(37.50,465.5) scale(0.8,1.0)" d="M1.5,0 H3.5 Q5,0 5,1.5 V3.5 Q5,5 3.5,5 H1.5 Q0,5 0,3.5 V1.5 Q0,0 1.5,0 Z M1.5,5 H3.5 Q5,5 5,6.5 V8.5 Q5,10 3.5,10 H1.5 Q0,10 0,8.5 V6.5 Q0,5 1.5,5 Z" fill="none" stroke="#ffffff" stroke-width="1.0" vector-effect="non-scaling-stroke"/>
<path transform="translate(13.50,547.5) scale(0.8,1.0)" d="M0,5 H5" fill="none" stroke="#ffffff" stroke-width="1.0" vector-effect="non-scaling-stroke"/>
<path transform="translate(19.50,547.5) scale(0.8,1.0)" d="M0,9 Q0.5,10 2,10 H3.5 Q5,10 5,8.5 V1.5 Q5,0 3.5,0 H1.5 Q0,0 0,1.5 V3.5 Q0,5 1.5,5 H5" fill="none" stroke="#ffffff" stroke-width="1.0" vector-effect="non-scaling-stroke"/>
<path transform="translate(25.50,547.5) scale(0.8,1.0)" d="M1.5,0 H3.5 Q5,0 5,1.5 V8.5 Q5,10 3.5,10 H1.5 Q0,10 0,8.5 V1.5 Q0,0 1.5,0 Z M4.5,2 L0.5,8" fill="none" stroke="#ffffff" stroke-width="1.0" vector-effect="non-scaling-stroke"/>
<rect x="32.60" y="556" width="2" height="2" fill="#ffffff"/>
<path transform="translate(37.50,547.5) scale(0.8,1.0)" d="M1.5,0 H3.5 Q5,0 5,1.5 V3.5 Q5,5 3.5,5 H1.5 Q0,5 0,3.5 V1.5 Q0,0 1.5,0 Z M1.5,5 H3.5 Q5,5 5,6.5 V8.5 Q5,10 3.5,10 H1.5 Q0,10 0,8.5 V6.5 Q0,5 1.5,5 Z" fill="none" stroke="#ffffff" stroke-width="1.0" vector-effect="non-scaling-stroke"/>
<rect x="12" y="559" width="68" height="15" fill="#000000" />
<rect x="13" y="560" width="66" height="13" fill="#ffffff" />
<path transform="translate(15.50,561.5) scale(1.0,1.0)" d="M1,2 L3,0 V10 M1,10 H5" fill="none" stroke="#000000" stroke-width="1.0" vector-effect="non-scaling-stroke"/>
<path transform="translate(23.50,561.5) scale(1.0,1.0)" d="M1.5,0 H3.5 Q5,0 5,1.5 V8.5 Q5,10 3.5,10 H1.5 Q0,10 0,8.5 V1.5 Q0,0 1.5,0 Z M4.5,2 L0.5,8" fill="none" stroke="#000000" stroke-width="1.0" vector-effect="non-scaling-stroke"/>
<path transform="translate(31.50,561.5) scale(1.0,1.0)" d="M5,0 H0 V4 H2.5 Q5,4 5,7 Q5,10 2.5,10 Q0.5,10 0,8.5" fill="none" stroke="#000000" stroke-width="1.0" vector-effect="non-scaling-stroke"/>
<path transform="translate(39.50,561.5) scale(1.0,1.0)" d="M0,9 Q0.5,10 2,10 H3.5 Q5,10 5,8.5 V1.5 Q5,0 3.5,0 H1.5 Q0,0 0,1.5 V3.5 Q0,5 1.5,5 H5" fill="none" stroke="#000000" stroke-width="1.0" vector-effect="non-scaling-stroke"/>
<rect x="49.00" y="570" width="2" height="2" fill="#000000"/>
<path transform="translate(55.50,561.5) scale(1.0,1.0)" d="M1.5,0 H3.5 Q5,0 5,1.5 V8.5 Q5,10 3.5,10 H1.5 Q0,10 0,8.5 V1.5 Q0,0 1.5,0 Z M4.5,2 L0.5,8" fill="none" stroke="#000000" stroke-width="1.0" vector-effect="non-scaling-stroke"/>
<path transform="translate(63.50,561.5) scale(1.0,1.0)" d="M1.5,0 H3.5 Q5,0 5,1.5 V8.5 Q5,10 3.5,10 H1.5 Q0,10 0,8.5 V1.5 Q0,0 1.5,0 Z M4.5,2 L0.5,8" fill="none" stroke="#000000" stroke-width="1.0" vector-effect="non-scaling-stroke"/>
<path transform="translate(71.50,561.5) scale(1.0,1.0)" d="M1.5,0 H3.5 Q5,0 5,1.5 V8.5 Q5,10 3.5,10 H1.5 Q0,10 0,8.5 V1.5 Q0,0 1.5,0 Z M4.5,2 L0.5,8" fill="none" stroke="#000000" stroke-width="1.0" vector-effect="non-scaling-stroke"/>
<path transform="translate(83.5,564.5) scale(1.0,1.0)" d="M1,1 V6 M0,1 H6 V6" fill="none" stroke="#ffffff" stroke-width="1" vector-effect="non-scaling-stroke"/>
<path transform="translate(91.5,564.5) scale(1.0,1.0)" d="M0,1 V6 M0,1 H6 V6 M3,1 V6" fill="none" stroke="#ffffff" stroke-width="1" vector-effect="non-scaling-stroke"/>
<rect x="316" y="559" width="68" height="15" fill="#000000" />
<rect x="317" y="560" width="66" height="13" fill="#ffffff" />
<path transform="translate(319.50,561.5) scale(1.0,1.0)" d="M1,2 L3,0 V10 M1,10 H5" fill="none" stroke="#000000" stroke-width="1.0" vector-effect="non-scaling-stroke"/>
<path transform="translate(327.50,561.5) scale(1.0,1.0)" d="M1.5,0 H3.5 Q5,0 5,1.5 V8.5 Q5,10 3.5,10 H1.5 Q0,10 0,8.5 V1.5 Q0,0 1.5,0 Z M4.5,2 L0.5,8" fill="none" stroke="#000000" stroke-width="1.0" vector-effect="non-scaling-stroke"/>
<path transform="translate(335.50,561.5) scale(1.0,1.0)" d="M5,1 Q4.5,0 3,0 H1.5 Q0,0 0,1.5 V8.5 Q0,10 1.5,10 H3.5 Q5,10 5,8.5 V6.5 Q5,5 3.5,5 H0" fill="none" stroke="#000000" stroke-width="1.0" vector-effect="non-scaling-stroke"/>
<path transform="translate(343.50,561.5) scale(1.0,1.0)" d="M4,10 V0 L0,7 H5" fill="none" stroke="#000000" stroke-width="1.0" vector-effect="non-scaling-stroke"/>
<rect x="353.00" y="570" width="2" height="2" fill="#000000"/>
<path transform="translate(359.50,561.5) scale(1.0,1.0)" d="M1.5,0 H3.5 Q5,0 5,1.5 V8.5 Q5,10 3.5,10 H1.5 Q0,10 0,8.5 V1.5 Q0,0 1.5,0 Z M4.5,2 L0.5,8" fill="none" stroke="#000000" stroke-width="1.0" vector-effect="non-scaling-stroke"/>
<path transform="translate(367.50,561.5) scale(1.0,1.0)" d="M1.5,0 H3.5 Q5,0 5,1.5 V8.5 Q5,10 3.5,10 H1.5 Q0,10 0,8.5 V1.5 Q0,0 1.5,0 Z M4.5,2 L0.5,8" fill="none" stroke="#000000" stroke-width="1.0" vector-effect="non-scaling-stroke"/>
<path transform="translate(375.50,561.5) scale(1.0,1.0)" d="M1.5,0 H3.5 Q5,0 5,1.5 V8.5 Q5,10 3.5,10 H1.5 Q0,10 0,8.5 V1.5 Q0,0 1.5,0 Z M4.5,2 L0.5,8" fill="none" stroke="#000000" stroke-width="1.0" vector-effect="non-scaling-stroke"/>
<path transform="translate(387.5,564.5) scale(1.0,1.0)" d="M1,1 V6 M0,1 H6 V6" fill="none" stroke="#ffffff" stroke-width="1" vector-effect="non-scaling-stroke"/>
<path transform="translate(395.5,564.5) scale(1.0,1.0)" d="M0,1 V6 M0,1 H6 V6 M3,1 V6" fill="none" stroke="#ffffff" stroke-width="1" vector-effect="non-scaling-stroke"/>
<rect x="460" y="559" width="52" height="15" fill="#000000" />
<rect x="461" y="560" width="50" height="13" fill="#ffffff" />
<path transform="translate(479.50,561.5) scale(1.0,1.0)" d="M1,2 L3,0 V10 M1,10 H5" fill="none" stroke="#000000" stroke-width="1.0" vector-effect="non-scaling-stroke"/>
<rect x="489.00" y="570" width="2" height="2" fill="#000000"/>
<path transform="translate(495.50,561.5) scale(1.0,1.0)" d="M1.5,0 H3.5 Q5,0 5,1.5 V8.5 Q5,10 3.5,10 H1.5 Q0,10 0,8.5 V1.5 Q0,0 1.5,0 Z M4.5,2 L0.5,8" fill="none" stroke="#000000" stroke-width="1.0" vector-effect="non-scaling-stroke"/>
<path transform="translate(503.50,561.5) scale(1.0,1.0)" d="M1.5,0 H3.5 Q5,0 5,1.5 V8.5 Q5,10 3.5,10 H1.5 Q0,10 0,8.5 V1.5 Q0,0 1.5,0 Z M4.5,2 L0.5,8" fill="none" stroke="#000000" stroke-width="1.0" vector-effect="non-scaling-stroke"/>
<path transform="translate(514.5,564.5) scale(1.0,1.0)" d="M1,1 V6 M0,1 H6 V6" fill="none" stroke="#ffffff" stroke-width="1" vector-effect="non-scaling-stroke"/>
<path transform="translate(522.5,564.5) scale(1.0,1.0)" d="M0,1 V6 M0,1 H6 V6 M3,1 V6" fill="none" stroke="#ffffff" stroke-width="1" vector-effect="non-scaling-stroke"/>
<path transform="translate(530.5,564.5) scale(1.0,1.0)" d="M0,6 L6,0" fill="none" stroke="#ffffff" stroke-width="1" vector-effect="non-scaling-stroke"/>
<path transform="translate(538.5,564.5) scale(1.0,1.0)" d="M0,0 V6 H3.5 Q6,6 6,3.5 V2.5 Q6,0 3.5,0 Z" fill="none" stroke="#ffffff" stroke-width="1" vector-effect="non-scaling-stroke"/>
<rect x="605" y="559" width="67" height="15" fill="#000000" />
<rect x="606" y="560" width="65" height="13" fill="#ffffff" />
<path transform="translate(607.50,561.5) scale(1.0,1.0)" d="M1,2 L3,0 V10 M1,10 H5" fill="none" stroke="#000000" stroke-width="1.0" vector-effect="non-scaling-stroke"/>
<path transform="translate(615.50,561.5) scale(1.0,1.0)" d="M1.5,0 H3.5 Q5,0 5,1.5 V8.5 Q5,10 3.5,10 H1.5 Q0,10 0,8.5 V1.5 Q0,0 1.5,0 Z M4.5,2 L0.5,8" fill="none" stroke="#000000" stroke-width="1.0" vector-effect="non-scaling-stroke"/>
<path transform="translate(623.50,561.5) scale(1.0,1.0)" d="M5,1 Q4.5,0 3,0 H1.5 Q0,0 0,1.5 V8.5 Q0,10 1.5,10 H3.5 Q5,10 5,8.5 V6.5 Q5,5 3.5,5 H0" fill="none" stroke="#000000" stroke-width="1.0" vector-effect="non-scaling-stroke"/>
<path transform="translate(631.50,561.5) scale(1.0,1.0)" d="M0,9 Q0.5,10 2,10 H3.5 Q5,10 5,8.5 V1.5 Q5,0 3.5,0 H1.5 Q0,0 0,1.5 V3.5 Q0,5 1.5,5 H5" fill="none" stroke="#000000" stroke-width="1.0" vector-effect="non-scaling-stroke"/>
<rect x="641.00" y="570" width="2" height="2" fill="#000000"/>
<path transform="translate(647.50,561.5) scale(1.0,1.0)" d="M1.5,0 H3.5 Q5,0 5,1.5 V8.5 Q5,10 3.5,10 H1.5 Q0,10 0,8.5 V1.5 Q0,0 1.5,0 Z M4.5,2 L0.5,8" fill="none" stroke="#000000" stroke-width="1.0" vector-effect="non-scaling-stroke"/>
<path transform="translate(655.50,561.5) scale(1.0,1.0)" d="M1.5,0 H3.5 Q5,0 5,1.5 V8.5 Q5,10 3.5,10 H1.5 Q0,10 0,8.5 V1.5 Q0,0 1.5,0 Z M4.5,2 L0.5,8" fill="none" stroke="#000000" stroke-width="1.0" vector-effect="non-scaling-stroke"/>
<path transform="translate(663.50,561.5) scale(1.0,1.0)" d="M1.5,0 H3.5 Q5,0 5,1.5 V8.5 Q5,10 3.5,10 H1.5 Q0,10 0,8.5 V1.5 Q0,0 1.5,0 Z M4.5,2 L0.5,8" fill="none" stroke="#000000" stroke-width="1.0" vector-effect="non-scaling-stroke"/>
<path transform="translate(675.5,564.5) scale(1.0,1.0)" d="M1,1 V6 M0,1 H6 V6" fill="none" stroke="#ffffff" stroke-width="1" vector-effect="non-scaling-stroke"/>
<path transform="translate(683.5,564.5) scale(1.0,1.0)" d="M0,1 V6 M0,1 H6 V6 M3,1 V6" fill="none" stroke="#ffffff" stroke-width="1" vector-effect="non-scaling-stroke"/>
<rect x="85" y="578" width="28" height="20" fill="#7474d6" />
<rect x="85" y="578" width="27" height="1" fill="#ffffff" />
<rect x="85" y="578" width="1" height="20" fill="#ffffff" />
<rect x="112" y="578" width="1" height="20" fill="#101040" />
<rect x="85" y="597" width="28" height="1" fill="#101040" />
<path transform="translate(87.5,581.5) scale(1.0,1.0)" d="M0,0 H6 M3,0 V6" fill="none" stroke="#000048" stroke-width="1" vector-effect="non-scaling-stroke"/>
<path transform="translate(95.5,581.5) scale(1.0,1.0)" d="M0,0 V6 H6" fill="none" stroke="#000048" stroke-width="1" vector-effect="non-scaling-stroke"/>
<path transform="translate(103.5,581.5) scale(1.0,1.0)" d="M6,1 Q6,0 5,0 H1 Q0,0 0,1 V2 Q0,3 1,3 H5 Q6,3 6,4 V5 Q6,6 5,6 H1 Q0,6 0,5" fill="none" stroke="#000048" stroke-width="1" vector-effect="non-scaling-stroke"/>
<path transform="translate(87.5,589.5) scale(1.0,1.0)" d="M6,1 Q6,0 5,0 H1 Q0,0 0,1 V2 Q0,3 1,3 H5 Q6,3 6,4 V5 Q6,6 5,6 H1 Q0,6 0,5" fill="none" stroke="#000048" stroke-width="1" vector-effect="non-scaling-stroke"/>
<path transform="translate(95.5,589.5) scale(1.0,1.0)" d="M0,0 L3,3 L6,0 M3,3 V6" fill="none" stroke="#000048" stroke-width="1" vector-effect="non-scaling-stroke"/>
<path transform="translate(103.5,589.5) scale(1.0,1.0)" d="M6,1 Q6,0 5,0 H1 Q0,0 0,1 V5 Q0,6 1,6 H5 Q6,6 6,5" fill="none" stroke="#000048" stroke-width="1" vector-effect="non-scaling-stroke"/>
<rect x="116" y="578" width="28" height="20" fill="#7474d6" />
<rect x="116" y="578" width="27" height="1" fill="#ffffff" />
<rect x="116" y="578" width="1" height="20" fill="#ffffff" />
<rect x="143" y="578" width="1" height="20" fill="#101040" />
<rect x="116" y="597" width="28" height="1" fill="#101040" />
<path transform="translate(118.5,581.5) scale(1.0,1.0)" d="M0,6 V0 H5 Q6,0 6,1 V2 Q6,3 5,3 H0 M4,3 L6,6" fill="none" stroke="#000048" stroke-width="1" vector-effect="non-scaling-stroke"/>
<path transform="translate(126.5,581.5) scale(1.0,1.0)" d="M6,0 H0 V6 H6 M0,3 H5" fill="none" stroke="#000048" stroke-width="1" vector-effect="non-scaling-stroke"/>
<path transform="translate(134.5,581.5) scale(1.0,1.0)" d="M6,1 Q6,0 5,0 H1 Q0,0 0,1 V2 Q0,3 1,3 H5 Q6,3 6,4 V5 Q6,6 5,6 H1 Q0,6 0,5" fill="none" stroke="#000048" stroke-width="1" vector-effect="non-scaling-stroke"/>
<path transform="translate(118.5,589.5) scale(1.0,1.0)" d="M6,1 Q6,0 5,0 H1 Q0,0 0,1 V5 Q0,6 1,6 H5 Q6,6 6,5" fill="none" stroke="#000048" stroke-width="1" vector-effect="non-scaling-stroke"/>
<path transform="translate(126.5,589.5) scale(1.0,1.0)" d="M1,0 H5 Q6,0 6,1 V5 Q6,6 5,6 H1 Q0,6 0,5 V1 Q0,0 1,0 Z" fill="none" stroke="#000048" stroke-width="1" vector-effect="non-scaling-stroke"/>
<path transform="translate(134.5,589.5) scale(1.0,1.0)" d="M0,6 V0 H5 Q6,0 6,1 V2 Q6,3 5,3 H0 M4,3 L6,6" fill="none" stroke="#000048" stroke-width="1" vector-effect="non-scaling-stroke"/>
<rect x="147" y="578" width="28" height="20" fill="#7474d6" />
<rect x="147" y="578" width="27" height="1" fill="#ffffff" />
<rect x="147" y="578" width="1" height="20" fill="#ffffff" />
<rect x="174" y="578" width="1" height="20" fill="#101040" />
<rect x="147" y="597" width="28" height="1" fill="#101040" />
<path transform="translate(149.5,581.5) scale(1.0,1.0)" d="M0,0 V6 H6" fill="none" stroke="#000048" stroke-width="1" vector-effect="non-scaling-stroke"/>
<path transform="translate(157.5,581.5) scale(1.0,1.0)" d="M0,0 L3,6 L6,0" fill="none" stroke="#000048" stroke-width="1" vector-effect="non-scaling-stroke"/>
<path transform="translate(165.5,581.5) scale(1.0,1.0)" d="M0,0 V6 H6" fill="none" stroke="#000048" stroke-width="1" vector-effect="non-scaling-stroke"/>
<path transform="translate(149.5,589.5) scale(1.0,1.0)" d="M6,1 Q6,0 5,0 H1 Q0,0 0,1 V2 Q0,3 1,3 H5 Q6,3 6,4 V5 Q6,6 5,6 H1 Q0,6 0,5" fill="none" stroke="#000048" stroke-width="1" vector-effect="non-scaling-stroke"/>
<path transform="translate(157.5,589.5) scale(1.0,1.0)" d="M0,0 V6 M6,0 V6 M0,3 H6" fill="none" stroke="#000048" stroke-width="1" vector-effect="non-scaling-stroke"/>
<path transform="translate(165.5,589.5) scale(1.0,1.0)" d="M6,0 H0 V6 M0,3 H5" fill="none" stroke="#000048" stroke-width="1" vector-effect="non-scaling-stroke"/>
<rect x="178" y="578" width="28" height="20" fill="#7474d6" />
<rect x="178" y="578" width="27" height="1" fill="#ffffff" />
<rect x="178" y="578" width="1" height="20" fill="#ffffff" />
<rect x="205" y="578" width="1" height="20" fill="#101040" />
<rect x="178" y="597" width="28" height="1" fill="#101040" />
<path transform="translate(180.5,581.5) scale(1.0,1.0)" d="M0,0 L1.5,6 L3,1.5 L4.5,6 L6,0" fill="none" stroke="#000048" stroke-width="1" vector-effect="non-scaling-stroke"/>
<path transform="translate(188.5,581.5) scale(1.0,1.0)" d="M0,0 V6 H6" fill="none" stroke="#000048" stroke-width="1" vector-effect="non-scaling-stroke"/>
<path transform="translate(180.5,589.5) scale(1.0,1.0)" d="M6,1 Q6,0 5,0 H1 Q0,0 0,1 V2 Q0,3 1,3 H5 Q6,3 6,4 V5 Q6,6 5,6 H1 Q0,6 0,5" fill="none" stroke="#000048" stroke-width="1" vector-effect="non-scaling-stroke"/>
<path transform="translate(188.5,589.5) scale(1.0,1.0)" d="M0,0 V6 M6,0 V6 M0,3 H6" fill="none" stroke="#000048" stroke-width="1" vector-effect="non-scaling-stroke"/>
<path transform="translate(196.5,589.5) scale(1.0,1.0)" d="M6,0 H0 V6 M0,3 H5" fill="none" stroke="#000048" stroke-width="1" vector-effect="non-scaling-stroke"/>
<rect x="209" y="578" width="28" height="20" fill="#7474d6" />
<rect x="209" y="578" width="27" height="1" fill="#ffffff" />
<rect x="209" y="578" width="1" height="20" fill="#ffffff" />
<rect x="236" y="578" width="1" height="20" fill="#101040" />
<rect x="209" y="597" width="28" height="1" fill="#101040" />
<path transform="translate(211.5,581.5) scale(1.0,1.0)" d="M0,6 V0 L6,6 V0" fill="none" stroke="#000048" stroke-width="1" vector-effect="non-scaling-stroke"/>
<path transform="translate(219.5,581.5) scale(1.0,1.0)" d="M1,0 H5 Q6,0 6,1 V5 Q6,6 5,6 H1 Q0,6 0,5 V1 Q0,0 1,0 Z" fill="none" stroke="#000048" stroke-width="1" vector-effect="non-scaling-stroke"/>
<path transform="translate(227.5,581.5) scale(1.0,1.0)" d="M1.5,0 H4.5 M3,0 V6 M1.5,6 H4.5" fill="none" stroke="#000048" stroke-width="1" vector-effect="non-scaling-stroke"/>
<path transform="translate(211.5,589.5) scale(1.0,1.0)" d="M0,6 V0 L3,4 L6,0 V6" fill="none" stroke="#000048" stroke-width="1" vector-effect="non-scaling-stroke"/>
<path transform="translate(219.5,589.5) scale(1.0,1.0)" d="M6,1 Q6,0 5,0 H1 Q0,0 0,1 V2 Q0,3 1,3 H5 Q6,3 6,4 V5 Q6,6 5,6 H1 Q0,6 0,5" fill="none" stroke="#000048" stroke-width="1" vector-effect="non-scaling-stroke"/>
<path transform="translate(227.5,589.5) scale(1.0,1.0)" d="M0,0 V6 M6,0 L0,4 M2,2.8 L6,6" fill="none" stroke="#000048" stroke-width="1" vector-effect="non-scaling-stroke"/>
<rect x="240" y="578" width="28" height="21" fill="#00002c" />
<rect x="267" y="578" width="1" height="21" fill="#ffffff" />
<rect x="240" y="598" width="28" height="1" fill="#ffffff" />
<path transform="translate(242.5,581.5) scale(1.0,1.0)" d="M6,1 Q6,0 5,0 H1 Q0,0 0,1 V2 Q0,3 1,3 H5 Q6,3 6,4 V5 Q6,6 5,6 H1 Q0,6 0,5" fill="none" stroke="#ffffff" stroke-width="1" vector-effect="non-scaling-stroke"/>
<path transform="translate(250.5,581.5) scale(1.0,1.0)" d="M0,6 V0 H5 Q6,0 6,1 V2 Q6,3 5,3 H0 M4,3 L6,6" fill="none" stroke="#ffffff" stroke-width="1" vector-effect="non-scaling-stroke"/>
<path transform="translate(258.5,581.5) scale(1.0,1.0)" d="M6,1 Q6,0 5,0 H1 Q0,0 0,1 V5 Q0,6 1,6 H5 Q6,6 6,5" fill="none" stroke="#ffffff" stroke-width="1" vector-effect="non-scaling-stroke"/>
<path transform="translate(242.5,589.5) scale(1.0,1.0)" d="M0,0 H6 L0,6 H6" fill="none" stroke="#ffffff" stroke-width="1" vector-effect="non-scaling-stroke"/>
<path transform="translate(250.5,589.5) scale(1.0,1.0)" d="M1,0 H5 Q6,0 6,1 V5 Q6,6 5,6 H1 Q0,6 0,5 V1 Q0,0 1,0 Z" fill="none" stroke="#ffffff" stroke-width="1" vector-effect="non-scaling-stroke"/>
<path transform="translate(258.5,589.5) scale(1.0,1.0)" d="M0,6 V0 L3,4 L6,0 V6" fill="none" stroke="#ffffff" stroke-width="1" vector-effect="non-scaling-stroke"/>
<rect x="271" y="578" width="28" height="20" fill="#7474d6" />
<rect x="271" y="578" width="27" height="1" fill="#ffffff" />
<rect x="271" y="578" width="1" height="20" fill="#ffffff" />
<rect x="298" y="578" width="1" height="20" fill="#101040" />
<rect x="271" y="597" width="28" height="1" fill="#101040" />
<path transform="translate(273.5,581.5) scale(1.0,1.0)" d="M6,1 Q6,0 5,0 H1 Q0,0 0,1 V2 Q0,3 1,3 H5 Q6,3 6,4 V5 Q6,6 5,6 H1 Q0,6 0,5" fill="none" stroke="#000048" stroke-width="1" vector-effect="non-scaling-stroke"/>
<path transform="translate(281.5,581.5) scale(1.0,1.0)" d="M0,6 V0 H5 Q6,0 6,1 V2 Q6,3 5,3 H0 M4,3 L6,6" fill="none" stroke="#000048" stroke-width="1" vector-effect="non-scaling-stroke"/>
<path transform="translate(289.5,581.5) scale(1.0,1.0)" d="M6,1 Q6,0 5,0 H1 Q0,0 0,1 V5 Q0,6 1,6 H5 Q6,6 6,5" fill="none" stroke="#000048" stroke-width="1" vector-effect="non-scaling-stroke"/>
<path transform="translate(273.5,589.5) scale(1.0,1.0)" d="M1.5,1 L3,0 V6 M1.5,6 H4.5" fill="none" stroke="#000048" stroke-width="1" vector-effect="non-scaling-stroke"/>
<path transform="translate(281.5,589.5) scale(1.0,1.0)" d="M1,3 H5" fill="none" stroke="#000048" stroke-width="1" vector-effect="non-scaling-stroke"/>
<path transform="translate(289.5,589.5) scale(1.0,1.0)" d="M0,1 Q0,0 1,0 H5 Q6,0 6,1 V2 Q6,3 5,3 H1 Q0,3 0,4 V6 H6" fill="none" stroke="#000048" stroke-width="1" vector-effect="non-scaling-stroke"/>
<rect x="302" y="578" width="28" height="21" fill="#00002c" />
<rect x="329" y="578" width="1" height="21" fill="#ffffff" />
<rect x="302" y="598" width="28" height="1" fill="#ffffff" />
<path transform="translate(304.5,581.5) scale(1.0,1.0)" d="M0,0 L3,6 L6,0" fill="none" stroke="#ffffff" stroke-width="1" vector-effect="non-scaling-stroke"/>
<path transform="translate(312.5,581.5) scale(1.0,1.0)" d="M0,6 V3.5 L2.5,0 H3.5 L6,3.5 V6 M0,3.5 H6" fill="none" stroke="#ffffff" stroke-width="1" vector-effect="non-scaling-stroke"/>
<path transform="translate(320.5,581.5) scale(1.0,1.0)" d="M6,1 Q6,0 5,0 H1 Q0,0 0,1 V5 Q0,6 1,6 H5 Q6,6 6,5" fill="none" stroke="#ffffff" stroke-width="1" vector-effect="non-scaling-stroke"/>
<path transform="translate(304.5,589.5) scale(1.0,1.0)" d="M0,0 L1.5,6 L3,1.5 L4.5,6 L6,0" fill="none" stroke="#ffffff" stroke-width="1" vector-effect="non-scaling-stroke"/>
<path transform="translate(312.5,589.5) scale(1.0,1.0)" d="M0,0 V6 H6" fill="none" stroke="#ffffff" stroke-width="1" vector-effect="non-scaling-stroke"/>
<rect x="333" y="578" width="28" height="20" fill="#7474d6" />
<rect x="333" y="578" width="27" height="1" fill="#ffffff" />
<rect x="333" y="578" width="1" height="20" fill="#ffffff" />
<rect x="360" y="578" width="1" height="20" fill="#101040" />
<rect x="333" y="597" width="28" height="1" fill="#101040" />
<path transform="translate(335.5,581.5) scale(1.0,1.0)" d="M0,6 V3.5 L2.5,0 H3.5 L6,3.5 V6 M0,3.5 H6" fill="none" stroke="#000048" stroke-width="1" vector-effect="non-scaling-stroke"/>
<path transform="translate(343.5,581.5) scale(1.0,1.0)" d="M0,0 V5 Q0,6 1,6 H5 Q6,6 6,5 V0" fill="none" stroke="#000048" stroke-width="1" vector-effect="non-scaling-stroke"/>
<path transform="translate(351.5,581.5) scale(1.0,1.0)" d="M0,0 H6 M3,0 V6" fill="none" stroke="#000048" stroke-width="1" vector-effect="non-scaling-stroke"/>
<path transform="translate(335.5,589.5) scale(1.0,1.0)" d="M1,0 H5 Q6,0 6,1 V5 Q6,6 5,6 H1 Q0,6 0,5 V1 Q0,0 1,0 Z" fill="none" stroke="#000048" stroke-width="1" vector-effect="non-scaling-stroke"/>
<path transform="translate(343.5,589.5) scale(1.0,1.0)" d="M6,0 H0 V6 M0,3 H5" fill="none" stroke="#000048" stroke-width="1" vector-effect="non-scaling-stroke"/>
<path transform="translate(351.5,589.5) scale(1.0,1.0)" d="M6,1 Q6,0 5,0 H1 Q0,0 0,1 V2 Q0,3 1,3 H5 Q6,3 6,4 V5 Q6,6 5,6 H1 Q0,6 0,5" fill="none" stroke="#000048" stroke-width="1" vector-effect="non-scaling-stroke"/>
<rect x="364" y="578" width="28" height="20" fill="#7474d6" />
<rect x="364" y="578" width="27" height="1" fill="#ffffff" />
<rect x="364" y="578" width="1" height="20" fill="#ffffff" />
<rect x="391" y="578" width="1" height="20" fill="#101040" />
<rect x="364" y="597" width="28" height="1" fill="#101040" />
<path transform="translate(366.5,581.5) scale(1.0,1.0)" d="M0,6 V3.5 L2.5,0 H3.5 L6,3.5 V6 M0,3.5 H6" fill="none" stroke="#000048" stroke-width="1" vector-effect="non-scaling-stroke"/>
<path transform="translate(374.5,581.5) scale(1.0,1.0)" d="M0,0 V5 Q0,6 1,6 H5 Q6,6 6,5 V0" fill="none" stroke="#000048" stroke-width="1" vector-effect="non-scaling-stroke"/>
<path transform="translate(382.5,581.5) scale(1.0,1.0)" d="M0,0 H6 M3,0 V6" fill="none" stroke="#000048" stroke-width="1" vector-effect="non-scaling-stroke"/>
<path transform="translate(366.5,589.5) scale(1.0,1.0)" d="M0,6 V3.5 L2.5,0 H3.5 L6,3.5 V6 M0,3.5 H6" fill="none" stroke="#000048" stroke-width="1" vector-effect="non-scaling-stroke"/>
<path transform="translate(374.5,589.5) scale(1.0,1.0)" d="M0,6 V0 L6,6 V0" fill="none" stroke="#000048" stroke-width="1" vector-effect="non-scaling-stroke"/>
<path transform="translate(382.5,589.5) scale(1.0,1.0)" d="M0,6 V3.5 L2.5,0 H3.5 L6,3.5 V6 M0,3.5 H6" fill="none" stroke="#000048" stroke-width="1" vector-effect="non-scaling-stroke"/>
<rect x="395" y="578" width="28" height="20" fill="#7474d6" />
<rect x="395" y="578" width="27" height="1" fill="#ffffff" />
<rect x="395" y="578" width="1" height="20" fill="#ffffff" />
<rect x="422" y="578" width="1" height="20" fill="#101040" />
<rect x="395" y="597" width="28" height="1" fill="#101040" />
<path transform="translate(397.5,581.5) scale(1.0,1.0)" d="M0,6 V3.5 L2.5,0 H3.5 L6,3.5 V6 M0,3.5 H6" fill="none" stroke="#000048" stroke-width="1" vector-effect="non-scaling-stroke"/>
<path transform="translate(405.5,581.5) scale(1.0,1.0)" d="M0,0 V5 Q0,6 1,6 H5 Q6,6 6,5 V0" fill="none" stroke="#000048" stroke-width="1" vector-effect="non-scaling-stroke"/>
<path transform="translate(413.5,581.5) scale(1.0,1.0)" d="M0,0 H6 M3,0 V6" fill="none" stroke="#000048" stroke-width="1" vector-effect="non-scaling-stroke"/>
<path transform="translate(397.5,589.5) scale(1.0,1.0)" d="M6,1 Q6,0 5,0 H1 Q0,0 0,1 V2 Q0,3 1,3 H5 Q6,3 6,4 V5 Q6,6 5,6 H1 Q0,6 0,5" fill="none" stroke="#000048" stroke-width="1" vector-effect="non-scaling-stroke"/>
<path transform="translate(405.5,589.5) scale(1.0,1.0)" d="M0,6 V0 H5 Q6,0 6,1 V2 Q6,3 5,3 H0 M4,3 L6,6" fill="none" stroke="#000048" stroke-width="1" vector-effect="non-scaling-stroke"/>
<path transform="translate(413.5,589.5) scale(1.0,1.0)" d="M6,1 Q6,0 5,0 H1 Q0,0 0,1 V5 Q0,6 1,6 H5 Q6,6 6,5" fill="none" stroke="#000048" stroke-width="1" vector-effect="non-scaling-stroke"/>
<rect x="426" y="578" width="28" height="20" fill="#7474d6" />
<rect x="426" y="578" width="27" height="1" fill="#ffffff" />
<rect x="426" y="578" width="1" height="20" fill="#ffffff" />
<rect x="453" y="578" width="1" height="20" fill="#101040" />
<rect x="426" y="597" width="28" height="1" fill="#101040" />
<path transform="translate(428.5,581.5) scale(1.0,1.0)" d="M0,6 V3.5 L2.5,0 H3.5 L6,3.5 V6 M0,3.5 H6" fill="none" stroke="#000048" stroke-width="1" vector-effect="non-scaling-stroke"/>
<path transform="translate(436.5,581.5) scale(1.0,1.0)" d="M0,0 V5 Q0,6 1,6 H5 Q6,6 6,5 V0" fill="none" stroke="#000048" stroke-width="1" vector-effect="non-scaling-stroke"/>
<path transform="translate(444.5,581.5) scale(1.0,1.0)" d="M0,0 H6 M3,0 V6" fill="none" stroke="#000048" stroke-width="1" vector-effect="non-scaling-stroke"/>
<path transform="translate(428.5,589.5) scale(1.0,1.0)" d="M6,1 Q6,0 5,0 H1 Q0,0 0,1 V2 Q0,3 1,3 H5 Q6,3 6,4 V5 Q6,6 5,6 H1 Q0,6 0,5" fill="none" stroke="#000048" stroke-width="1" vector-effect="non-scaling-stroke"/>
<path transform="translate(436.5,589.5) scale(1.0,1.0)" d="M6,1 Q6,0 5,0 H1 Q0,0 0,1 V5 Q0,6 1,6 H5 Q6,6 6,5" fill="none" stroke="#000048" stroke-width="1" vector-effect="non-scaling-stroke"/>
<path transform="translate(444.5,589.5) scale(1.0,1.0)" d="M0,0 V6 H6" fill="none" stroke="#000048" stroke-width="1" vector-effect="non-scaling-stroke"/>
<rect x="457" y="578" width="28" height="21" fill="#00002c" />
<rect x="484" y="578" width="1" height="21" fill="#ffffff" />
<rect x="457" y="598" width="28" height="1" fill="#ffffff" />
<path transform="translate(459.5,581.5) scale(1.0,1.0)" d="M0,6 V3.5 L2.5,0 H3.5 L6,3.5 V6 M0,3.5 H6" fill="none" stroke="#ffffff" stroke-width="1" vector-effect="non-scaling-stroke"/>
<path transform="translate(467.5,581.5) scale(1.0,1.0)" d="M0,0 V5 Q0,6 1,6 H5 Q6,6 6,5 V0" fill="none" stroke="#ffffff" stroke-width="1" vector-effect="non-scaling-stroke"/>
<path transform="translate(475.5,581.5) scale(1.0,1.0)" d="M0,0 H6 M3,0 V6" fill="none" stroke="#ffffff" stroke-width="1" vector-effect="non-scaling-stroke"/>
<path transform="translate(459.5,589.5) scale(1.0,1.0)" d="M0,6 V0 H5 Q6,0 6,1 V2 Q6,3 5,3 H0 M4,3 L6,6" fill="none" stroke="#ffffff" stroke-width="1" vector-effect="non-scaling-stroke"/>
<path transform="translate(467.5,589.5) scale(1.0,1.0)" d="M6,0 H0 V6 H6 M0,3 H5" fill="none" stroke="#ffffff" stroke-width="1" vector-effect="non-scaling-stroke"/>
<path transform="translate(475.5,589.5) scale(1.0,1.0)" d="M6,0 H0 V6 M0,3 H5" fill="none" stroke="#ffffff" stroke-width="1" vector-effect="non-scaling-stroke"/>
<rect x="488" y="578" width="28" height="20" fill="#7474d6" />
<rect x="488" y="578" width="27" height="1" fill="#ffffff" />
<rect x="488" y="578" width="1" height="20" fill="#ffffff" />
<rect x="515" y="578" width="1" height="20" fill="#101040" />
<rect x="488" y="597" width="28" height="1" fill="#101040" />
<path transform="translate(490.5,581.5) scale(1.0,1.0)" d="M0,6 V3.5 L2.5,0 H3.5 L6,3.5 V6 M0,3.5 H6" fill="none" stroke="#000048" stroke-width="1" vector-effect="non-scaling-stroke"/>
<path transform="translate(498.5,581.5) scale(1.0,1.0)" d="M0,0 V5 Q0,6 1,6 H5 Q6,6 6,5 V0" fill="none" stroke="#000048" stroke-width="1" vector-effect="non-scaling-stroke"/>
<path transform="translate(506.5,581.5) scale(1.0,1.0)" d="M0,0 H6 M3,0 V6" fill="none" stroke="#000048" stroke-width="1" vector-effect="non-scaling-stroke"/>
<path transform="translate(490.5,589.5) scale(1.0,1.0)" d="M6,1 Q6,0 5,0 H1 Q0,0 0,1 V5 Q0,6 1,6 H5 Q6,6 6,5" fill="none" stroke="#000048" stroke-width="1" vector-effect="non-scaling-stroke"/>
<path transform="translate(498.5,589.5) scale(1.0,1.0)" d="M0,0 H6 M3,0 V6" fill="none" stroke="#000048" stroke-width="1" vector-effect="non-scaling-stroke"/>
<path transform="translate(506.5,589.5) scale(1.0,1.0)" d="M0,6 V0 H5 Q6,0 6,1 V2 Q6,3 5,3 H0 M4,3 L6,6" fill="none" stroke="#000048" stroke-width="1" vector-effect="non-scaling-stroke"/>
<rect x="519" y="578" width="28" height="20" fill="#7474d6" />
<rect x="519" y="578" width="27" height="1" fill="#ffffff" />
<rect x="519" y="578" width="1" height="20" fill="#ffffff" />
<rect x="546" y="578" width="1" height="20" fill="#101040" />
<rect x="519" y="597" width="28" height="1" fill="#101040" />
<path transform="translate(521.5,581.5) scale(1.0,1.0)" d="M6,1 Q6,0 5,0 H1 Q0,0 0,1 V2 Q0,3 1,3 H5 Q6,3 6,4 V5 Q6,6 5,6 H1 Q0,6 0,5" fill="none" stroke="#000048" stroke-width="1" vector-effect="non-scaling-stroke"/>
<path transform="translate(529.5,581.5) scale(1.0,1.0)" d="M0,0 L1.5,6 L3,1.5 L4.5,6 L6,0" fill="none" stroke="#000048" stroke-width="1" vector-effect="non-scaling-stroke"/>
<path transform="translate(537.5,581.5) scale(1.0,1.0)" d="M0,6 V0 H5 Q6,0 6,1 V2 Q6,3 5,3 H0" fill="none" stroke="#000048" stroke-width="1" vector-effect="non-scaling-stroke"/>
<path transform="translate(521.5,589.5) scale(1.0,1.0)" d="M1.5,0 H4.5 M3,0 V6 M1.5,6 H4.5" fill="none" stroke="#000048" stroke-width="1" vector-effect="non-scaling-stroke"/>
<path transform="translate(529.5,589.5) scale(1.0,1.0)" d="M0,6 V0 L6,6 V0" fill="none" stroke="#000048" stroke-width="1" vector-effect="non-scaling-stroke"/>
<path transform="translate(537.5,589.5) scale(1.0,1.0)" d="M0,0 H6 M3,0 V6" fill="none" stroke="#000048" stroke-width="1" vector-effect="non-scaling-stroke"/>
<rect x="550" y="578" width="28" height="20" fill="#7474d6" />
<rect x="550" y="578" width="27" height="1" fill="#ffffff" />
<rect x="550" y="578" width="1" height="20" fill="#ffffff" />
<rect x="577" y="578" width="1" height="20" fill="#101040" />
<rect x="550" y="597" width="28" height="1" fill="#101040" />
<path transform="translate(552.5,581.5) scale(1.0,1.0)" d="M6,1 Q6,0 5,0 H1 Q0,0 0,1 V2 Q0,3 1,3 H5 Q6,3 6,4 V5 Q6,6 5,6 H1 Q0,6 0,5" fill="none" stroke="#000048" stroke-width="1" vector-effect="non-scaling-stroke"/>
<path transform="translate(560.5,581.5) scale(1.0,1.0)" d="M0,0 L1.5,6 L3,1.5 L4.5,6 L6,0" fill="none" stroke="#000048" stroke-width="1" vector-effect="non-scaling-stroke"/>
<path transform="translate(568.5,581.5) scale(1.0,1.0)" d="M0,6 V0 H5 Q6,0 6,1 V2 Q6,3 5,3 H0" fill="none" stroke="#000048" stroke-width="1" vector-effect="non-scaling-stroke"/>
<path transform="translate(552.5,589.5) scale(1.0,1.0)" d="M1.5,1 L3,0 V6 M1.5,6 H4.5" fill="none" stroke="#000048" stroke-width="1" vector-effect="non-scaling-stroke"/>
<path transform="translate(560.5,589.5) scale(1.0,1.0)" d="M1,3 H5" fill="none" stroke="#000048" stroke-width="1" vector-effect="non-scaling-stroke"/>
<path transform="translate(568.5,589.5) scale(1.0,1.0)" d="M0,1 Q0,0 1,0 H5 Q6,0 6,1 V2 Q6,3 5,3 H1 Q0,3 0,4 V6 H6" fill="none" stroke="#000048" stroke-width="1" vector-effect="non-scaling-stroke"/>
<rect x="586" y="578" width="33" height="20" fill="#7474d6" />
<rect x="586" y="578" width="32" height="1" fill="#ffffff" />
<rect x="586" y="578" width="1" height="20" fill="#ffffff" />
<rect x="618" y="578" width="1" height="20" fill="#101040" />
<rect x="586" y="597" width="33" height="1" fill="#101040" />
<path transform="translate(592.5,586.5) scale(1.0,1.0)" d="M0,6 V0 H5 Q6,0 6,1 V2 Q6,3 5,3 H0 M4,3 L6,6" fill="none" stroke="#000030" stroke-width="1" vector-effect="non-scaling-stroke"/>
<path transform="translate(600.5,586.5) scale(1.0,1.0)" d="M0,6 V0 H5 Q6,0 6,1 V2 Q6,3 5,3 H0" fill="none" stroke="#000030" stroke-width="1" vector-effect="non-scaling-stroke"/>
<path transform="translate(608.5,586.5) scale(1.0,1.0)" d="M0,0 H6 M3,0 V6" fill="none" stroke="#000030" stroke-width="1" vector-effect="non-scaling-stroke"/>
<path transform="translate(591.5,585.5) scale(1.0,1.0)" d="M0,6 V0 H5 Q6,0 6,1 V2 Q6,3 5,3 H0 M4,3 L6,6" fill="none" stroke="#f8f860" stroke-width="1" vector-effect="non-scaling-stroke"/>
<path transform="translate(599.5,585.5) scale(1.0,1.0)" d="M0,6 V0 H5 Q6,0 6,1 V2 Q6,3 5,3 H0" fill="none" stroke="#f8f860" stroke-width="1" vector-effect="non-scaling-stroke"/>
<path transform="translate(607.5,585.5) scale(1.0,1.0)" d="M0,0 H6 M3,0 V6" fill="none" stroke="#f8f860" stroke-width="1" vector-effect="non-scaling-stroke"/>
<rect x="622" y="578" width="33" height="20" fill="#7474d6" />
<rect x="622" y="578" width="32" height="1" fill="#ffffff" />
<rect x="622" y="578" width="1" height="20" fill="#ffffff" />
<rect x="654" y="578" width="1" height="20" fill="#101040" />
<rect x="622" y="597" width="33" height="1" fill="#101040" />
<path transform="translate(628.5,586.5) scale(1.0,1.0)" d="M6,1 Q6,0 5,0 H1 Q0,0 0,1 V2 Q0,3 1,3 H5 Q6,3 6,4 V5 Q6,6 5,6 H1 Q0,6 0,5" fill="none" stroke="#000030" stroke-width="1" vector-effect="non-scaling-stroke"/>
<path transform="translate(636.5,586.5) scale(1.0,1.0)" d="M6,1 Q6,0 5,0 H1 Q0,0 0,1 V5 Q0,6 1,6 H5 Q6,6 6,5 V3 H3" fill="none" stroke="#000030" stroke-width="1" vector-effect="non-scaling-stroke"/>
<path transform="translate(644.5,586.5) scale(1.0,1.0)" d="M0,0 V6 H6" fill="none" stroke="#000030" stroke-width="1" vector-effect="non-scaling-stroke"/>
<path transform="translate(627.5,585.5) scale(1.0,1.0)" d="M6,1 Q6,0 5,0 H1 Q0,0 0,1 V2 Q0,3 1,3 H5 Q6,3 6,4 V5 Q6,6 5,6 H1 Q0,6 0,5" fill="none" stroke="#f8f860" stroke-width="1" vector-effect="non-scaling-stroke"/>
<path transform="translate(635.5,585.5) scale(1.0,1.0)" d="M6,1 Q6,0 5,0 H1 Q0,0 0,1 V5 Q0,6 1,6 H5 Q6,6 6,5 V3 H3" fill="none" stroke="#f8f860" stroke-width="1" vector-effect="non-scaling-stroke"/>
<path transform="translate(643.5,585.5) scale(1.0,1.0)" d="M0,0 V6 H6" fill="none" stroke="#f8f860" stroke-width="1" vector-effect="non-scaling-stroke"/>
<rect x="658" y="578" width="33" height="20" fill="#00002c" />
<rect x="690" y="578" width="1" height="20" fill="#ffffff" />
<rect x="658" y="597" width="33" height="1" fill="#ffffff" />
<path transform="translate(664.5,586.5) scale(1.0,1.0)" d="M6,1 Q6,0 5,0 H1 Q0,0 0,1 V2 Q0,3 1,3 H5 Q6,3 6,4 V5 Q6,6 5,6 H1 Q0,6 0,5" fill="none" stroke="#000030" stroke-width="1" vector-effect="non-scaling-stroke"/>
<path transform="translate(672.5,586.5) scale(1.0,1.0)" d="M0,0 H6 M3,0 V6" fill="none" stroke="#000030" stroke-width="1" vector-effect="non-scaling-stroke"/>
<path transform="translate(680.5,586.5) scale(1.0,1.0)" d="M0,6 V0 H5 Q6,0 6,1 V2 Q6,3 5,3 H0" fill="none" stroke="#000030" stroke-width="1" vector-effect="non-scaling-stroke"/>
<path transform="translate(663.5,585.5) scale(1.0,1.0)" d="M6,1 Q6,0 5,0 H1 Q0,0 0,1 V2 Q0,3 1,3 H5 Q6,3 6,4 V5 Q6,6 5,6 H1 Q0,6 0,5" fill="none" stroke="#f8f860" stroke-width="1" vector-effect="non-scaling-stroke"/>
<path transform="translate(671.5,585.5) scale(1.0,1.0)" d="M0,0 H6 M3,0 V6" fill="none" stroke="#f8f860" stroke-width="1" vector-effect="non-scaling-stroke"/>
<path transform="translate(679.5,585.5) scale(1.0,1.0)" d="M0,6 V0 H5 Q6,0 6,1 V2 Q6,3 5,3 H0" fill="none" stroke="#f8f860" stroke-width="1" vector-effect="non-scaling-stroke"/>
<path d="M47,476h1v24h-1zM48,471h1v29h-1zM49,471h1v42h-1zM50,473h1v10h-1zM51,473h1v56h-1zM52,473h1v14h-1zM53,471h1v16h-1zM54,472h1v9h-1zM55,472h1v9h-1zM56,471h1v8h-1zM57,474h1v5h-1zM58,470h1v17h-1zM59,467h1v20h-1zM60,469h1v10h-1zM61,467h1v28h-1zM62,467h1v9h-1zM63,470h1v9h-1zM64,470h1v12h-1zM65,466h1v28h-1zM66,471h1v18h-1zM67,468h1v11h-1zM68,469h1v11h-1zM69,465h1v11h-1zM70,465h1v16h-1zM71,472h1v7h-1zM72,465h1v9h-1zM73,470h1v34h-1zM74,465h1v14h-1zM75,468h1v10h-1zM76,466h1v9h-1zM77,470h1v9h-1zM78,470h1v7h-1zM79,470h1v22h-1zM80,470h1v9h-1zM81,472h1v15h-1zM82,469h1v18h-1zM83,470h1v9h-1zM84,469h1v10h-1zM85,467h1v13h-1zM86,468h1v26h-1zM87,469h1v21h-1zM88,467h1v32h-1zM89,469h1v25h-1zM90,469h1v36h-1zM91,472h1v7h-1zM92,470h1v19h-1zM93,469h1v12h-1zM94,468h1v11h-1zM95,468h1v16h-1zM96,472h1v5h-1zM97,468h1v15h-1zM98,466h1v15h-1zM99,469h1v9h-1zM100,468h1v8h-1zM101,472h1v8h-1zM102,472h1v9h-1zM103,466h1v12h-1zM104,464h1v14h-1zM105,464h1v9h-1zM106,470h1v8h-1zM107,470h1v4h-1zM108,464h1v9h-1zM109,466h1v8h-1zM110,467h1v11h-1zM111,471h1v7h-1zM112,465h1v10h-1zM113,465h1v6h-1zM114,466h1v6h-1zM115,468h1v8h-1zM116,470h1v19h-1zM117,465h1v10h-1zM118,468h1v5h-1zM119,463h1v10h-1zM120,464h1v24h-1zM121,463h1v17h-1zM122,466h1v13h-1zM123,466h1v4h-1zM124,467h1v9h-1zM125,463h1v9h-1zM126,463h1v9h-1zM127,465h1v12h-1zM128,467h1v10h-1zM129,466h1v16h-1zM130,469h1v13h-1zM131,466h1v11h-1zM132,464h1v10h-1zM133,464h1v5h-1zM134,464h1v6h-1zM135,466h1v17h-1zM136,457h1v11h-1zM137,457h1v13h-1zM138,461h1v7h-1zM139,461h1v7h-1zM140,459h1v9h-1zM141,458h1v14h-1zM142,459h1v10h-1zM143,457h1v15h-1zM144,458h1v8h-1zM145,457h1v8h-1zM146,457h1v10h-1zM147,461h1v6h-1zM148,458h1v10h-1zM149,457h1v9h-1zM150,463h1v4h-1zM151,459h1v8h-1zM152,456h1v9h-1zM153,460h1v3h-1zM154,457h1v8h-1zM155,459h1v4h-1zM156,459h1v10h-1zM157,458h1v10h-1zM158,456h1v12h-1zM159,457h1v6h-1zM160,456h1v6h-1zM161,455h1v7h-1zM162,457h1v6h-1zM163,457h1v5h-1zM164,456h1v4h-1zM165,455h1v5h-1zM166,448h1v12h-1zM167,452h1v6h-1zM168,449h1v9h-1zM169,450h1v8h-1zM170,448h1v10h-1zM171,448h1v7h-1zM172,448h1v4h-1zM173,444h1v9h-1zM174,446h1v6h-1zM175,445h1v7h-1zM176,442h1v7h-1zM177,442h1v9h-1zM178,445h1v4h-1zM179,443h1v6h-1zM180,443h1v5h-1zM181,445h1v4h-1zM182,442h1v5h-1zM183,442h1v7h-1zM184,442h1v4h-1zM185,442h1v3h-1zM186,440h1v6h-1zM187,440h1v6h-1zM188,442h1v3h-1zM189,438h1v6h-1zM190,438h1v7h-1zM191,439h1v6h-1zM192,440h1v4h-1zM193,436h1v8h-1zM194,436h1v8h-1zM195,437h1v7h-1zM196,438h1v5h-1zM197,439h1v6h-1zM198,438h1v7h-1zM199,439h1v5h-1zM200,439h1v5h-1zM201,437h1v7h-1zM202,437h1v4h-1zM203,440h1v2h-1zM204,437h1v5h-1zM205,438h1v4h-1zM206,439h1v3h-1zM207,437h1v5h-1zM208,437h1v6h-1zM209,437h1v4h-1zM210,438h1v3h-1zM211,437h1v3h-1zM212,436h1v5h-1zM213,437h1v4h-1zM214,435h1v5h-1zM215,433h1v3h-1zM216,433h1v7h-1zM217,433h1v4h-1zM218,431h1v5h-1zM219,428h1v7h-1zM220,430h1v4h-1zM221,431h1v2h-1zM222,430h1v3h-1zM223,427h1v4h-1zM224,427h1v5h-1zM225,426h1v3h-1zM226,425h1v3h-1zM227,422h1v5h-1zM228,422h1v6h-1zM229,422h1v4h-1zM230,420h1v4h-1zM231,419h1v6h-1zM232,416h1v5h-1zM233,418h1v2h-1zM234,415h1v4h-1zM235,414h1v5h-1zM236,413h1v4h-1zM237,411h1v6h-1zM238,409h1v5h-1zM239,409h1v3h-1zM240,408h1v5h-1zM241,407h1v4h-1zM242,406h1v3h-1zM243,401h1v6h-1zM244,402h1v4h-1zM245,400h1v3h-1zM246,400h1v2h-1zM247,398h1v4h-1zM248,397h1v2h-1zM249,396h1v3h-1zM250,393h1v5h-1zM251,393h1v4h-1zM252,393h1v4h-1zM253,391h1v5h-1zM254,389h1v5h-1zM255,391h1v2h-1zM256,390h1v3h-1zM257,388h1v3h-1zM258,388h1v4h-1zM259,388h1v2h-1zM260,387h1v3h-1zM261,387h1v2h-1zM262,387h1v2h-1zM263,386h1v3h-1zM264,387h1v1h-1zM265,386h1v2h-1zM266,385h1v2h-1zM267,384h1v3h-1zM268,384h1v3h-1zM269,384h1v2h-1zM270,383h1v3h-1zM271,382h1v3h-1zM272,383h1v2h-1zM273,382h1v2h-1zM274,381h1v3h-1zM275,381h1v3h-1zM276,381h1v2h-1zM277,380h1v3h-1zM278,380h1v2h-1zM279,379h1v3h-1zM280,379h1v3h-1zM281,379h1v3h-1zM282,379h1v3h-1zM283,379h1v3h-1zM284,378h1v3h-1zM285,379h1v2h-1zM286,379h1v3h-1zM287,380h1v2h-1zM288,381h1v2h-1zM289,380h1v3h-1zM290,382h1v1h-1zM291,382h1v2h-1zM292,382h1v2h-1zM293,382h1v3h-1zM294,382h1v3h-1zM295,381h1v2h-1zM296,381h1v2h-1zM297,380h1v3h-1zM298,379h1v3h-1zM299,378h1v3h-1zM300,377h1v2h-1zM301,375h1v4h-1zM302,373h1v4h-1zM303,371h1v3h-1zM304,370h1v2h-1zM305,368h1v3h-1zM306,366h1v3h-1zM307,364h1v3h-1zM308,363h1v2h-1zM309,362h1v2h-1zM310,360h1v3h-1zM311,359h1v2h-1zM312,357h1v3h-1zM313,355h1v3h-1zM314,352h1v4h-1zM315,348h1v5h-1zM316,347h1v2h-1zM317,345h1v3h-1zM318,331h1v15h-1zM319,315h1v17h-1zM320,291h1v25h-1zM321,276h1v16h-1zM322,251h1v26h-1zM323,233h1v19h-1zM324,231h1v10h-1zM325,240h1v30h-1zM326,269h1v12h-1zM327,280h1v15h-1zM328,294h1v19h-1zM329,312h1v14h-1zM330,325h1v17h-1zM331,341h1v5h-1zM332,345h1v13h-1zM333,352h1v6h-1zM334,349h1v4h-1zM335,349h1v7h-1zM336,355h1v9h-1zM337,363h1v6h-1zM338,368h1v4h-1zM339,368h1v6h-1zM340,369h1v4h-1zM341,365h1v6h-1zM342,365h1v8h-1zM343,372h1v3h-1zM344,371h1v6h-1zM345,368h1v8h-1zM346,368h1v6h-1zM347,373h1v5h-1zM348,376h1v3h-1zM349,377h1v3h-1zM350,377h1v4h-1zM351,379h1v2h-1zM352,379h1v4h-1zM353,380h1v3h-1zM354,381h1v2h-1zM355,381h1v2h-1zM356,381h1v3h-1zM357,381h1v3h-1zM358,382h1v2h-1zM359,382h1v2h-1zM360,382h1v2h-1zM361,382h1v2h-1zM362,382h1v3h-1zM363,382h1v2h-1zM364,382h1v2h-1zM365,382h1v2h-1zM366,382h1v2h-1zM367,381h1v2h-1zM368,381h1v3h-1zM369,381h1v2h-1zM370,381h1v1h-1zM371,381h1v2h-1zM372,379h1v4h-1zM373,379h1v4h-1zM374,379h1v3h-1zM375,380h1v2h-1zM376,380h1v2h-1zM377,380h1v2h-1zM378,380h1v2h-1zM379,380h1v2h-1zM380,381h1v1h-1zM381,380h1v2h-1zM382,380h1v3h-1zM383,381h1v1h-1zM384,380h1v3h-1zM385,381h1v2h-1zM386,381h1v2h-1zM387,381h1v2h-1zM388,381h1v2h-1zM389,382h1v2h-1zM390,382h1v2h-1zM391,382h1v3h-1zM392,381h1v4h-1zM393,383h1v2h-1zM394,383h1v2h-1zM395,383h1v3h-1zM396,384h1v2h-1zM397,384h1v2h-1zM398,384h1v2h-1zM399,384h1v2h-1zM400,384h1v2h-1zM401,384h1v3h-1zM402,384h1v3h-1zM403,384h1v3h-1zM404,385h1v2h-1zM405,385h1v2h-1zM406,385h1v2h-1zM407,385h1v2h-1zM408,384h1v3h-1zM409,385h1v2h-1zM410,385h1v2h-1zM411,385h1v2h-1zM412,384h1v3h-1zM413,384h1v3h-1zM414,385h1v2h-1zM415,385h1v2h-1zM416,385h1v3h-1zM417,386h1v2h-1zM418,386h1v2h-1zM419,386h1v2h-1zM420,387h1v2h-1zM421,387h1v3h-1zM422,388h1v3h-1zM423,389h1v2h-1zM424,390h1v4h-1zM425,392h1v3h-1zM426,394h1v3h-1zM427,396h1v3h-1zM428,398h1v3h-1zM429,400h1v3h-1zM430,401h1v4h-1zM431,403h1v4h-1zM432,406h1v3h-1zM433,408h1v4h-1zM434,411h1v3h-1zM435,412h1v3h-1zM436,414h1v2h-1zM437,415h1v5h-1zM438,419h1v2h-1zM439,420h1v4h-1zM440,423h1v1h-1zM441,423h1v3h-1zM442,425h1v3h-1zM443,426h1v3h-1zM444,427h1v4h-1zM445,429h1v2h-1zM446,430h1v3h-1zM447,430h1v3h-1zM448,430h1v4h-1zM449,431h1v4h-1zM450,431h1v4h-1zM451,432h1v2h-1zM452,432h1v4h-1zM453,433h1v3h-1zM454,433h1v2h-1zM455,433h1v4h-1zM456,432h1v3h-1zM457,432h1v3h-1zM458,433h1v4h-1zM459,433h1v3h-1zM460,432h1v4h-1zM461,432h1v4h-1zM462,432h1v5h-1zM463,431h1v6h-1zM464,431h1v6h-1zM465,431h1v5h-1zM466,431h1v3h-1zM467,432h1v4h-1zM468,430h1v6h-1zM469,430h1v8h-1zM470,432h1v6h-1zM471,434h1v4h-1zM472,433h1v5h-1zM473,433h1v5h-1zM474,433h1v5h-1zM475,432h1v6h-1zM476,432h1v8h-1zM477,434h1v5h-1zM478,435h1v5h-1zM479,437h1v3h-1zM480,438h1v6h-1zM481,437h1v7h-1zM482,439h1v3h-1zM483,438h1v6h-1zM484,440h1v5h-1zM485,440h1v2h-1zM486,439h1v5h-1zM487,440h1v6h-1zM488,440h1v5h-1zM489,443h1v6h-1zM490,443h1v6h-1zM491,443h1v4h-1zM492,445h1v2h-1zM493,443h1v6h-1zM494,443h1v9h-1zM495,444h1v8h-1zM496,445h1v5h-1zM497,444h1v10h-1zM498,445h1v9h-1zM499,443h1v9h-1zM500,446h1v6h-1zM501,446h1v4h-1zM502,446h1v7h-1zM503,445h1v6h-1zM504,445h1v7h-1zM505,445h1v18h-1zM506,446h1v7h-1zM507,448h1v8h-1zM508,449h1v7h-1zM509,445h1v11h-1zM510,447h1v7h-1zM511,448h1v7h-1zM512,445h1v8h-1zM513,447h1v7h-1zM514,450h1v5h-1zM515,450h1v4h-1zM516,447h1v9h-1zM517,447h1v8h-1zM518,449h1v6h-1zM519,449h1v6h-1zM520,445h1v19h-1zM521,449h1v9h-1zM522,450h1v8h-1zM523,447h1v7h-1zM524,449h1v11h-1zM525,451h1v7h-1zM526,449h1v6h-1zM527,451h1v8h-1zM528,451h1v8h-1zM529,451h1v8h-1zM530,451h1v10h-1zM531,450h1v17h-1zM532,450h1v15h-1zM533,452h1v6h-1zM534,453h1v8h-1zM535,452h1v11h-1zM536,454h1v8h-1zM537,456h1v6h-1zM538,454h1v8h-1zM539,455h1v7h-1zM540,455h1v16h-1zM541,453h1v6h-1zM542,454h1v9h-1zM543,455h1v8h-1zM544,455h1v9h-1zM545,455h1v9h-1zM546,456h1v8h-1zM547,456h1v8h-1zM548,451h1v15h-1zM549,459h1v4h-1zM550,460h1v6h-1zM551,454h1v9h-1zM552,454h1v9h-1zM553,458h1v15h-1zM554,454h1v10h-1zM555,457h1v10h-1zM556,458h1v11h-1zM557,457h1v12h-1zM558,457h1v10h-1zM559,460h1v11h-1zM560,456h1v9h-1zM561,457h1v9h-1zM562,458h1v11h-1zM563,456h1v11h-1zM564,456h1v10h-1zM565,457h1v9h-1zM566,456h1v19h-1zM567,462h1v7h-1zM568,461h1v9h-1zM569,460h1v13h-1zM570,458h1v9h-1zM571,461h1v5h-1zM572,462h1v14h-1zM573,459h1v17h-1zM574,462h1v7h-1zM575,462h1v15h-1zM576,464h1v4h-1zM577,463h1v6h-1zM578,464h1v9h-1zM579,464h1v8h-1zM580,462h1v11h-1zM581,460h1v16h-1zM582,462h1v22h-1zM583,463h1v6h-1zM584,464h1v11h-1zM585,464h1v8h-1zM586,464h1v4h-1zM587,464h1v6h-1zM588,464h1v6h-1zM589,464h1v12h-1zM590,463h1v16h-1zM591,468h1v12h-1zM592,467h1v13h-1zM593,464h1v10h-1zM594,459h1v12h-1zM595,459h1v12h-1zM596,462h1v8h-1zM597,460h1v10h-1zM598,464h1v16h-1zM599,469h1v4h-1zM600,468h1v6h-1zM601,463h1v9h-1zM602,462h1v6h-1zM603,462h1v11h-1zM604,465h1v7h-1zM605,462h1v11h-1zM606,463h1v22h-1zM607,467h1v10h-1zM608,464h1v16h-1zM609,469h1v11h-1zM610,470h1v7h-1zM611,469h1v7h-1zM612,466h1v8h-1zM613,464h1v18h-1zM614,464h1v12h-1zM615,467h1v9h-1zM616,469h1v11h-1zM617,466h1v8h-1zM618,465h1v10h-1zM619,465h1v14h-1zM620,468h1v7h-1zM621,465h1v7h-1zM622,468h1v8h-1zM623,466h1v15h-1zM624,467h1v8h-1zM625,463h1v88h-1zM626,463h1v13h-1zM627,467h1v14h-1zM628,467h1v26h-1zM629,464h1v10h-1zM630,464h1v12h-1zM631,467h1v8h-1zM632,471h1v13h-1zM633,470h1v14h-1zM634,470h1v10h-1zM635,468h1v8h-1zM636,469h1v16h-1zM637,471h1v13h-1zM638,471h1v8h-1zM639,470h1v11h-1zM640,473h1v8h-1zM641,471h1v8h-1zM642,468h1v10h-1zM643,469h1v15h-1zM644,476h1v22h-1zM645,476h1v25h-1zM646,472h1v6h-1zM647,468h1v9h-1z" fill="#ffff00" shape-rendering="crispEdges"/>
<polygon points="320,222 328.5,222 324.25,229.5" fill="#ff0000"/></svg>
</body></html>
